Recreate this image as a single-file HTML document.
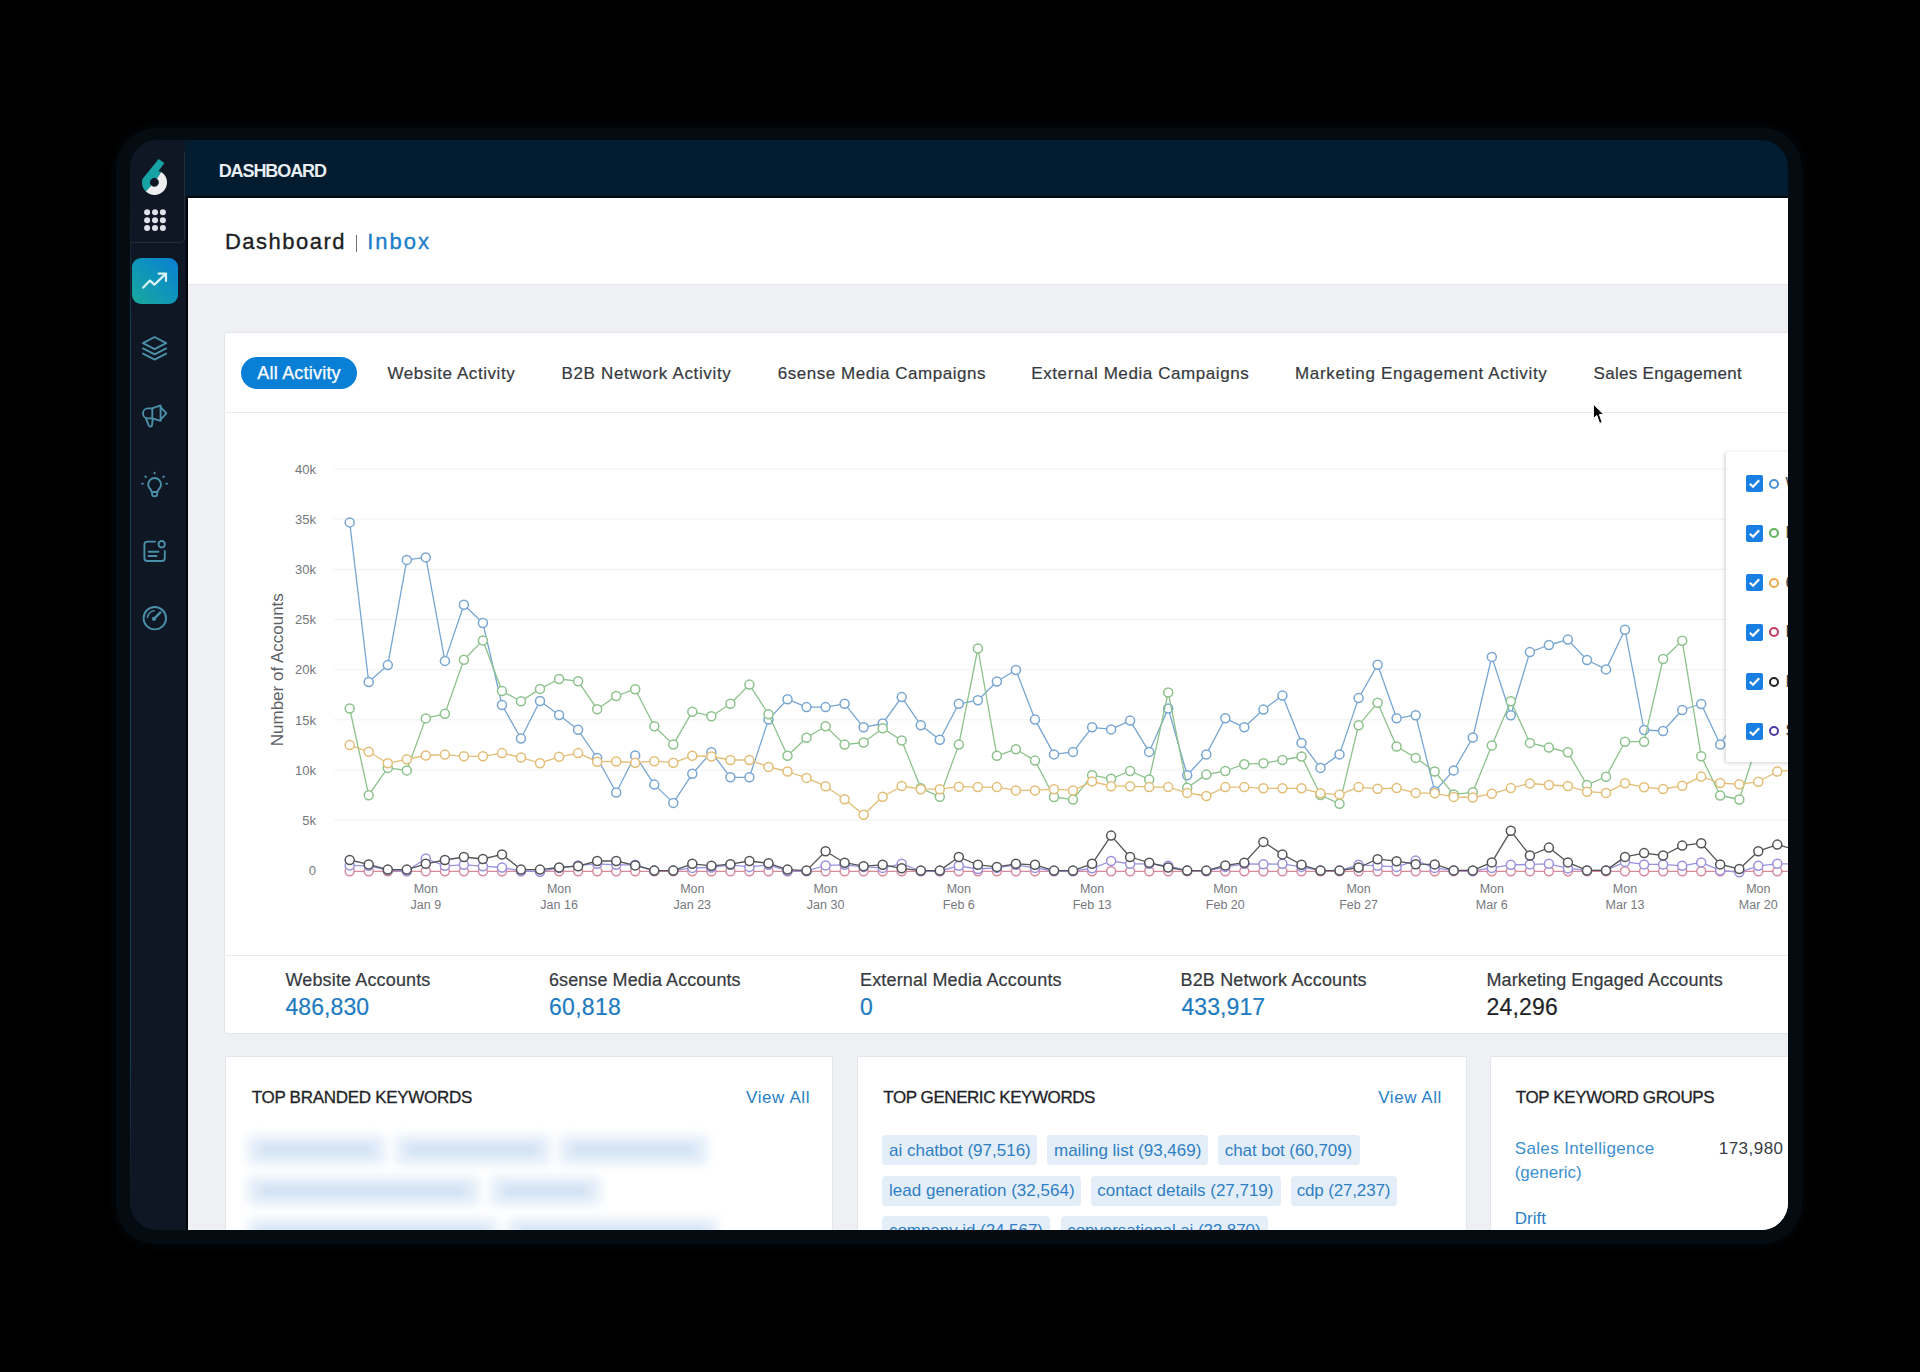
<!DOCTYPE html>
<html><head><meta charset="utf-8">
<style>
*{margin:0;padding:0;box-sizing:border-box}
html,body{width:1920px;height:1372px;background:#000;overflow:hidden;font-family:"Liberation Sans",sans-serif}
.abs{position:absolute}
#frame{position:absolute;left:115.5px;top:128px;width:1686.5px;height:1116px;border-radius:40px;background:#040b11;box-shadow:0 0 9px 2px rgba(4,10,15,.8)}
#win{position:absolute;left:130px;top:140px;width:1658px;height:1090px;border-radius:27px;overflow:hidden;background:#0f1624}
#hdr{position:absolute;left:54.6px;top:0;width:1604px;height:57px;background:#031c30}
#logobox{position:absolute;left:0;top:12px;width:54.6px;height:90.5px;border:1.2px solid #252c38;border-top:none;border-left:none;border-bottom-right-radius:5px}
#content{position:absolute;left:58px;top:57px;width:1600px;height:1033px;background:#eef0f3}
#cline{position:absolute;left:56px;top:56px;width:2px;height:1034px;background:#03070b}
#cline2{position:absolute;left:56px;top:56px;width:1602px;height:1.5px;background:#03070b}
#titlebar{position:absolute;left:58px;top:58px;width:1600px;height:86.5px;background:#fff;border-bottom:1px solid #e1e4e8}
.card{position:absolute;background:#fff;border:1px solid #e2e5e9;border-radius:2px}
.line{position:absolute;height:1px;background:#e6e8eb}
.txt{position:absolute;white-space:nowrap;line-height:1}
.chip{position:absolute;background:#e4eef8;border-radius:4px}
.bchip{position:absolute;background:#e6eff9;border-radius:6px;filter:blur(5px)}
.bin{position:absolute;left:12px;right:12px;top:10px;bottom:10px;background:#cde0f3;border-radius:4px}
#pill{position:absolute;background:#0a7fd6;border-radius:16px}
#legend{position:absolute;background:#fff;box-shadow:-1px 1px 4px rgba(0,0,0,.18);border-radius:2px}
.cb{position:absolute;width:17px;height:17px;background:#1a7fe3;border-radius:2px}
.cb svg{position:absolute;left:0;top:0}
.ldot{position:absolute;width:10px;height:10px;border:2px solid #333;border-radius:50%}
svg text{font-family:"Liberation Sans",sans-serif}
</style></head>
<body>
<div id="frame"></div>
<div id="win">
  <div id="hdr"></div>
  <div id="logobox"></div>
  <!-- logo -->
  <svg class="abs" style="left:0;top:0" width="58" height="110" viewBox="130 140 58 110">
    <path d="M158.6 158.9 L164.4 162.9 L158.4 171.2 L161.31 171.92 L156.90 178.71 A4.4 4.4 0 0 0 151.44 185.57 L145.82 191.39 A12.5 12.5 0 0 1 142.48 178.95 Z" fill="#17a2a5"/>
    <path d="M161.31 171.92 A12.5 12.5 0 1 1 145.82 191.39 L151.44 185.57 A4.4 4.4 0 1 0 156.90 178.71 Z" fill="#eceef0"/>
    <g fill="#dfe3e9">
      <circle cx="147.1" cy="212.3" r="3"/><circle cx="155" cy="212.3" r="3"/><circle cx="162.9" cy="212.3" r="3"/>
      <circle cx="147.1" cy="220.2" r="3"/><circle cx="155" cy="220.2" r="3"/><circle cx="162.9" cy="220.2" r="3"/>
      <circle cx="147.1" cy="228.1" r="3"/><circle cx="155" cy="228.1" r="3"/><circle cx="162.9" cy="228.1" r="3"/>
    </g>
  </svg>
  <!-- active nav -->
  <div class="abs" style="left:1.8px;top:118px;width:46px;height:46px;border-radius:9px;background:linear-gradient(45deg,#1aa99b 0%,#0e93bd 55%,#0b7fd3 100%)"></div>
  <svg class="abs" style="left:0;top:0" width="58" height="700" viewBox="130 140 58 700">
    <path d="M143.2 287.6 L150 280.6 L154.4 284.6 L165.2 274.4" fill="none" stroke="#d9f3f7" stroke-width="2.2" stroke-linecap="round" stroke-linejoin="round"/>
    <path d="M158.6 273.6 L166 273.6 L166 281" fill="none" stroke="#d9f3f7" stroke-width="2.2" stroke-linecap="round" stroke-linejoin="round"/>
    <g fill="none" stroke="#4a90a9" stroke-width="1.9" stroke-linejoin="round" stroke-linecap="round">
      <!-- layers -->
      <path d="M154.6 337 L166.2 343.2 L154.6 349.2 L143 343.2 Z"/>
      <path d="M143 348.4 L154.6 354.4 L166.2 348.4"/>
      <path d="M143 353.6 L154.6 359.6 L166.2 353.6"/>
      <!-- megaphone -->
      <path d="M152.3 408.4 L160.6 405.4 L160.6 420.8 L152.3 418.3 Z"/>
      <path d="M160.8 407.3 L166.4 413.3 L160.8 419.3"/>
      <path d="M152.3 408.4 L148 408.4 A5 5 0 0 0 148 418.4 L152.3 418.4"/>
      <path d="M146 418.3 L148.8 425.6 Q150.4 427.6 152 425.6 L152.8 418.6"/>
      <!-- bulb -->
      <path d="M150.6 489.4 A6.4 6.4 0 1 1 158.6 489.4 L157.4 492 L151.8 492 Z"/>
      <path d="M152 493.8 A2.6 2.6 0 0 0 157.2 493.8"/>
      <path d="M154.6 472.6 L154.6 473.4 M145.2 476.4 L146 477.2 M164 476.4 L163.2 477.2 M142 483.6 L143 483.6 M167.2 483.6 L166.2 483.6"/>
      <!-- contact card -->
      <path d="M155 541.6 L147.4 541.6 A3 3 0 0 0 144.4 544.6 L144.4 558 A3 3 0 0 0 147.4 561 L161.8 561 A3 3 0 0 0 164.8 558 L164.8 551"/>
      <circle cx="161.7" cy="544.2" r="3.2"/>
      <path d="M148.6 551.7 L158.4 551.7 M148.6 556 L156.4 556" stroke-width="2"/>
      <!-- gauge -->
      <circle cx="154.8" cy="618.2" r="11.2"/>
      <path d="M147.4 617.6 A7.4 7.4 0 0 1 154.2 610.8" stroke-width="1.5"/>
      <path d="M154 618.8 L160.4 612.4" stroke-width="2.4"/>
      <circle cx="154" cy="618.8" r="1.2" fill="#4a8ea6"/>
    </g>
  </svg>
  <div class="abs" style="left:0;top:60px;width:1px;height:1000px;background:linear-gradient(#0f1624,rgba(35,120,150,.45) 15%,rgba(35,120,150,.4) 85%,#0f1624)"></div>
  <div id="content"></div>
  <div id="cline"></div>
  <div id="cline2"></div>
  <div id="titlebar"></div>
  <!-- main card -->
  <div class="card" style="left:94.4px;top:191.7px;width:1600px;height:702px"></div>
  <div class="line" style="left:96px;top:272px;width:1600px;background:#e8eaed"></div>
  <div class="line" style="left:96px;top:814.5px;width:1600px;background:#e8eaed"></div>
  <div id="pill" style="left:110.6px;top:216.7px;width:116.8px;height:32.2px"></div>
  <svg class="abs" style="left:0;top:0" width="1658" height="1090" viewBox="130 140 1658 1090">
<line x1="334" y1="820.1" x2="1790" y2="820.1" stroke="#f0f1f3" stroke-width="1"/>
<line x1="334" y1="770.0" x2="1790" y2="770.0" stroke="#f0f1f3" stroke-width="1"/>
<line x1="334" y1="719.8" x2="1790" y2="719.8" stroke="#f0f1f3" stroke-width="1"/>
<line x1="334" y1="669.7" x2="1790" y2="669.7" stroke="#f0f1f3" stroke-width="1"/>
<line x1="334" y1="619.5" x2="1790" y2="619.5" stroke="#f0f1f3" stroke-width="1"/>
<line x1="334" y1="569.3" x2="1790" y2="569.3" stroke="#f0f1f3" stroke-width="1"/>
<line x1="334" y1="519.2" x2="1790" y2="519.2" stroke="#f0f1f3" stroke-width="1"/>
<line x1="334" y1="469.0" x2="1790" y2="469.0" stroke="#f0f1f3" stroke-width="1"/>
<text x="316" y="875.0" text-anchor="end" font-size="13" fill="#74777c">0</text>
<text x="316" y="824.8" text-anchor="end" font-size="13" fill="#74777c">5k</text>
<text x="316" y="774.7" text-anchor="end" font-size="13" fill="#74777c">10k</text>
<text x="316" y="724.5" text-anchor="end" font-size="13" fill="#74777c">15k</text>
<text x="316" y="674.4" text-anchor="end" font-size="13" fill="#74777c">20k</text>
<text x="316" y="624.2" text-anchor="end" font-size="13" fill="#74777c">25k</text>
<text x="316" y="574.0" text-anchor="end" font-size="13" fill="#74777c">30k</text>
<text x="316" y="523.9" text-anchor="end" font-size="13" fill="#74777c">35k</text>
<text x="316" y="473.7" text-anchor="end" font-size="13" fill="#74777c">40k</text>
<text transform="translate(282.6 669.7) rotate(-90)" text-anchor="middle" font-size="17" fill="#5d6065">Number of Accounts</text>
<text x="425.8" y="892.5" text-anchor="middle" font-size="12.5" fill="#77797e">Mon</text>
<text x="425.8" y="908.5" text-anchor="middle" font-size="12.5" fill="#77797e">Jan 9</text>
<text x="559.1" y="892.5" text-anchor="middle" font-size="12.5" fill="#77797e">Mon</text>
<text x="559.1" y="908.5" text-anchor="middle" font-size="12.5" fill="#77797e">Jan 16</text>
<text x="692.3" y="892.5" text-anchor="middle" font-size="12.5" fill="#77797e">Mon</text>
<text x="692.3" y="908.5" text-anchor="middle" font-size="12.5" fill="#77797e">Jan 23</text>
<text x="825.6" y="892.5" text-anchor="middle" font-size="12.5" fill="#77797e">Mon</text>
<text x="825.6" y="908.5" text-anchor="middle" font-size="12.5" fill="#77797e">Jan 30</text>
<text x="958.8" y="892.5" text-anchor="middle" font-size="12.5" fill="#77797e">Mon</text>
<text x="958.8" y="908.5" text-anchor="middle" font-size="12.5" fill="#77797e">Feb 6</text>
<text x="1092.1" y="892.5" text-anchor="middle" font-size="12.5" fill="#77797e">Mon</text>
<text x="1092.1" y="908.5" text-anchor="middle" font-size="12.5" fill="#77797e">Feb 13</text>
<text x="1225.3" y="892.5" text-anchor="middle" font-size="12.5" fill="#77797e">Mon</text>
<text x="1225.3" y="908.5" text-anchor="middle" font-size="12.5" fill="#77797e">Feb 20</text>
<text x="1358.6" y="892.5" text-anchor="middle" font-size="12.5" fill="#77797e">Mon</text>
<text x="1358.6" y="908.5" text-anchor="middle" font-size="12.5" fill="#77797e">Feb 27</text>
<text x="1491.8" y="892.5" text-anchor="middle" font-size="12.5" fill="#77797e">Mon</text>
<text x="1491.8" y="908.5" text-anchor="middle" font-size="12.5" fill="#77797e">Mar 6</text>
<text x="1625.0" y="892.5" text-anchor="middle" font-size="12.5" fill="#77797e">Mon</text>
<text x="1625.0" y="908.5" text-anchor="middle" font-size="12.5" fill="#77797e">Mar 13</text>
<text x="1758.3" y="892.5" text-anchor="middle" font-size="12.5" fill="#77797e">Mon</text>
<text x="1758.3" y="908.5" text-anchor="middle" font-size="12.5" fill="#77797e">Mar 20</text>
<polyline points="349.7,522.4 368.7,682.0 387.8,665.1 406.8,559.9 425.8,557.4 444.9,660.9 463.9,604.7 482.9,623.0 502.0,705.0 521.0,738.5 540.0,701.0 559.1,715.0 578.1,729.8 597.2,758.0 616.2,792.5 635.2,755.4 654.3,784.6 673.3,802.9 692.3,773.8 711.4,752.3 730.4,777.3 749.4,777.3 768.5,719.6 787.5,699.2 806.5,707.1 825.6,707.1 844.6,703.8 863.6,727.3 882.7,723.5 901.7,697.1 920.8,725.2 939.8,739.8 958.8,703.8 977.9,700.2 996.9,681.5 1015.9,670.0 1035.0,719.6 1054.0,754.4 1073.0,751.9 1092.1,727.3 1111.1,729.4 1130.1,720.6 1149.2,751.9 1168.2,708.5 1187.2,775.2 1206.3,754.4 1225.3,718.3 1244.3,727.3 1263.4,709.6 1282.4,695.6 1301.5,742.9 1320.5,767.9 1339.5,754.4 1358.6,698.1 1377.6,664.8 1396.6,718.3 1415.7,715.2 1434.7,791.2 1453.7,770.4 1472.8,737.5 1491.8,656.9 1510.8,715.2 1529.9,652.1 1548.9,645.0 1567.9,639.6 1587.0,660.0 1606.0,669.4 1625.0,629.8 1644.1,730.0 1663.1,731.0 1682.2,710.0 1701.2,704.0 1720.2,744.5 1739.3,715.0 1758.3,700.0 1777.3,690.0 1796.4,680.0" fill="none" stroke="#77a6d2" stroke-width="1.3" stroke-linejoin="round"/>
<circle cx="349.7" cy="522.4" r="4.5" fill="#fff" stroke="#77a6d2" stroke-width="1.5"/>
<circle cx="368.7" cy="682.0" r="4.5" fill="#fff" stroke="#77a6d2" stroke-width="1.5"/>
<circle cx="387.8" cy="665.1" r="4.5" fill="#fff" stroke="#77a6d2" stroke-width="1.5"/>
<circle cx="406.8" cy="559.9" r="4.5" fill="#fff" stroke="#77a6d2" stroke-width="1.5"/>
<circle cx="425.8" cy="557.4" r="4.5" fill="#fff" stroke="#77a6d2" stroke-width="1.5"/>
<circle cx="444.9" cy="660.9" r="4.5" fill="#fff" stroke="#77a6d2" stroke-width="1.5"/>
<circle cx="463.9" cy="604.7" r="4.5" fill="#fff" stroke="#77a6d2" stroke-width="1.5"/>
<circle cx="482.9" cy="623.0" r="4.5" fill="#fff" stroke="#77a6d2" stroke-width="1.5"/>
<circle cx="502.0" cy="705.0" r="4.5" fill="#fff" stroke="#77a6d2" stroke-width="1.5"/>
<circle cx="521.0" cy="738.5" r="4.5" fill="#fff" stroke="#77a6d2" stroke-width="1.5"/>
<circle cx="540.0" cy="701.0" r="4.5" fill="#fff" stroke="#77a6d2" stroke-width="1.5"/>
<circle cx="559.1" cy="715.0" r="4.5" fill="#fff" stroke="#77a6d2" stroke-width="1.5"/>
<circle cx="578.1" cy="729.8" r="4.5" fill="#fff" stroke="#77a6d2" stroke-width="1.5"/>
<circle cx="597.2" cy="758.0" r="4.5" fill="#fff" stroke="#77a6d2" stroke-width="1.5"/>
<circle cx="616.2" cy="792.5" r="4.5" fill="#fff" stroke="#77a6d2" stroke-width="1.5"/>
<circle cx="635.2" cy="755.4" r="4.5" fill="#fff" stroke="#77a6d2" stroke-width="1.5"/>
<circle cx="654.3" cy="784.6" r="4.5" fill="#fff" stroke="#77a6d2" stroke-width="1.5"/>
<circle cx="673.3" cy="802.9" r="4.5" fill="#fff" stroke="#77a6d2" stroke-width="1.5"/>
<circle cx="692.3" cy="773.8" r="4.5" fill="#fff" stroke="#77a6d2" stroke-width="1.5"/>
<circle cx="711.4" cy="752.3" r="4.5" fill="#fff" stroke="#77a6d2" stroke-width="1.5"/>
<circle cx="730.4" cy="777.3" r="4.5" fill="#fff" stroke="#77a6d2" stroke-width="1.5"/>
<circle cx="749.4" cy="777.3" r="4.5" fill="#fff" stroke="#77a6d2" stroke-width="1.5"/>
<circle cx="768.5" cy="719.6" r="4.5" fill="#fff" stroke="#77a6d2" stroke-width="1.5"/>
<circle cx="787.5" cy="699.2" r="4.5" fill="#fff" stroke="#77a6d2" stroke-width="1.5"/>
<circle cx="806.5" cy="707.1" r="4.5" fill="#fff" stroke="#77a6d2" stroke-width="1.5"/>
<circle cx="825.6" cy="707.1" r="4.5" fill="#fff" stroke="#77a6d2" stroke-width="1.5"/>
<circle cx="844.6" cy="703.8" r="4.5" fill="#fff" stroke="#77a6d2" stroke-width="1.5"/>
<circle cx="863.6" cy="727.3" r="4.5" fill="#fff" stroke="#77a6d2" stroke-width="1.5"/>
<circle cx="882.7" cy="723.5" r="4.5" fill="#fff" stroke="#77a6d2" stroke-width="1.5"/>
<circle cx="901.7" cy="697.1" r="4.5" fill="#fff" stroke="#77a6d2" stroke-width="1.5"/>
<circle cx="920.8" cy="725.2" r="4.5" fill="#fff" stroke="#77a6d2" stroke-width="1.5"/>
<circle cx="939.8" cy="739.8" r="4.5" fill="#fff" stroke="#77a6d2" stroke-width="1.5"/>
<circle cx="958.8" cy="703.8" r="4.5" fill="#fff" stroke="#77a6d2" stroke-width="1.5"/>
<circle cx="977.9" cy="700.2" r="4.5" fill="#fff" stroke="#77a6d2" stroke-width="1.5"/>
<circle cx="996.9" cy="681.5" r="4.5" fill="#fff" stroke="#77a6d2" stroke-width="1.5"/>
<circle cx="1015.9" cy="670.0" r="4.5" fill="#fff" stroke="#77a6d2" stroke-width="1.5"/>
<circle cx="1035.0" cy="719.6" r="4.5" fill="#fff" stroke="#77a6d2" stroke-width="1.5"/>
<circle cx="1054.0" cy="754.4" r="4.5" fill="#fff" stroke="#77a6d2" stroke-width="1.5"/>
<circle cx="1073.0" cy="751.9" r="4.5" fill="#fff" stroke="#77a6d2" stroke-width="1.5"/>
<circle cx="1092.1" cy="727.3" r="4.5" fill="#fff" stroke="#77a6d2" stroke-width="1.5"/>
<circle cx="1111.1" cy="729.4" r="4.5" fill="#fff" stroke="#77a6d2" stroke-width="1.5"/>
<circle cx="1130.1" cy="720.6" r="4.5" fill="#fff" stroke="#77a6d2" stroke-width="1.5"/>
<circle cx="1149.2" cy="751.9" r="4.5" fill="#fff" stroke="#77a6d2" stroke-width="1.5"/>
<circle cx="1168.2" cy="708.5" r="4.5" fill="#fff" stroke="#77a6d2" stroke-width="1.5"/>
<circle cx="1187.2" cy="775.2" r="4.5" fill="#fff" stroke="#77a6d2" stroke-width="1.5"/>
<circle cx="1206.3" cy="754.4" r="4.5" fill="#fff" stroke="#77a6d2" stroke-width="1.5"/>
<circle cx="1225.3" cy="718.3" r="4.5" fill="#fff" stroke="#77a6d2" stroke-width="1.5"/>
<circle cx="1244.3" cy="727.3" r="4.5" fill="#fff" stroke="#77a6d2" stroke-width="1.5"/>
<circle cx="1263.4" cy="709.6" r="4.5" fill="#fff" stroke="#77a6d2" stroke-width="1.5"/>
<circle cx="1282.4" cy="695.6" r="4.5" fill="#fff" stroke="#77a6d2" stroke-width="1.5"/>
<circle cx="1301.5" cy="742.9" r="4.5" fill="#fff" stroke="#77a6d2" stroke-width="1.5"/>
<circle cx="1320.5" cy="767.9" r="4.5" fill="#fff" stroke="#77a6d2" stroke-width="1.5"/>
<circle cx="1339.5" cy="754.4" r="4.5" fill="#fff" stroke="#77a6d2" stroke-width="1.5"/>
<circle cx="1358.6" cy="698.1" r="4.5" fill="#fff" stroke="#77a6d2" stroke-width="1.5"/>
<circle cx="1377.6" cy="664.8" r="4.5" fill="#fff" stroke="#77a6d2" stroke-width="1.5"/>
<circle cx="1396.6" cy="718.3" r="4.5" fill="#fff" stroke="#77a6d2" stroke-width="1.5"/>
<circle cx="1415.7" cy="715.2" r="4.5" fill="#fff" stroke="#77a6d2" stroke-width="1.5"/>
<circle cx="1434.7" cy="791.2" r="4.5" fill="#fff" stroke="#77a6d2" stroke-width="1.5"/>
<circle cx="1453.7" cy="770.4" r="4.5" fill="#fff" stroke="#77a6d2" stroke-width="1.5"/>
<circle cx="1472.8" cy="737.5" r="4.5" fill="#fff" stroke="#77a6d2" stroke-width="1.5"/>
<circle cx="1491.8" cy="656.9" r="4.5" fill="#fff" stroke="#77a6d2" stroke-width="1.5"/>
<circle cx="1510.8" cy="715.2" r="4.5" fill="#fff" stroke="#77a6d2" stroke-width="1.5"/>
<circle cx="1529.9" cy="652.1" r="4.5" fill="#fff" stroke="#77a6d2" stroke-width="1.5"/>
<circle cx="1548.9" cy="645.0" r="4.5" fill="#fff" stroke="#77a6d2" stroke-width="1.5"/>
<circle cx="1567.9" cy="639.6" r="4.5" fill="#fff" stroke="#77a6d2" stroke-width="1.5"/>
<circle cx="1587.0" cy="660.0" r="4.5" fill="#fff" stroke="#77a6d2" stroke-width="1.5"/>
<circle cx="1606.0" cy="669.4" r="4.5" fill="#fff" stroke="#77a6d2" stroke-width="1.5"/>
<circle cx="1625.0" cy="629.8" r="4.5" fill="#fff" stroke="#77a6d2" stroke-width="1.5"/>
<circle cx="1644.1" cy="730.0" r="4.5" fill="#fff" stroke="#77a6d2" stroke-width="1.5"/>
<circle cx="1663.1" cy="731.0" r="4.5" fill="#fff" stroke="#77a6d2" stroke-width="1.5"/>
<circle cx="1682.2" cy="710.0" r="4.5" fill="#fff" stroke="#77a6d2" stroke-width="1.5"/>
<circle cx="1701.2" cy="704.0" r="4.5" fill="#fff" stroke="#77a6d2" stroke-width="1.5"/>
<circle cx="1720.2" cy="744.5" r="4.5" fill="#fff" stroke="#77a6d2" stroke-width="1.5"/>
<circle cx="1739.3" cy="715.0" r="4.5" fill="#fff" stroke="#77a6d2" stroke-width="1.5"/>
<circle cx="1758.3" cy="700.0" r="4.5" fill="#fff" stroke="#77a6d2" stroke-width="1.5"/>
<circle cx="1777.3" cy="690.0" r="4.5" fill="#fff" stroke="#77a6d2" stroke-width="1.5"/>
<circle cx="1796.4" cy="680.0" r="4.5" fill="#fff" stroke="#77a6d2" stroke-width="1.5"/>
<polyline points="349.7,708.5 368.7,795.2 387.8,767.9 406.8,770.4 425.8,718.4 444.9,713.7 463.9,659.7 482.9,640.4 502.0,691.1 521.0,701.3 540.0,688.9 559.1,679.0 578.1,681.2 597.2,709.2 616.2,696.0 635.2,689.2 654.3,726.2 673.3,744.6 692.3,711.7 711.4,716.2 730.4,703.8 749.4,684.6 768.5,714.2 787.5,755.8 806.5,737.7 825.6,726.2 844.6,744.6 863.6,742.5 882.7,728.3 901.7,740.4 920.8,788.3 939.8,796.7 958.8,744.6 977.9,648.5 996.9,755.8 1015.9,749.2 1035.0,760.6 1054.0,797.0 1073.0,799.6 1092.1,775.2 1111.1,778.8 1130.1,771.0 1149.2,779.4 1168.2,692.5 1187.2,787.7 1206.3,774.6 1225.3,771.0 1244.3,764.2 1263.4,763.3 1282.4,760.0 1301.5,756.5 1320.5,795.0 1339.5,803.8 1358.6,725.2 1377.6,702.8 1396.6,746.5 1415.7,757.9 1434.7,771.5 1453.7,794.4 1472.8,792.3 1491.8,745.4 1510.8,701.2 1529.9,742.9 1548.9,747.5 1567.9,752.3 1587.0,785.0 1606.0,776.7 1625.0,741.7 1644.1,741.7 1663.1,659.0 1682.2,640.8 1701.2,756.3 1720.2,795.5 1739.3,799.5 1758.3,740.0 1777.3,720.0 1796.4,700.0" fill="none" stroke="#8cc28b" stroke-width="1.3" stroke-linejoin="round"/>
<circle cx="349.7" cy="708.5" r="4.5" fill="#fff" stroke="#8cc28b" stroke-width="1.5"/>
<circle cx="368.7" cy="795.2" r="4.5" fill="#fff" stroke="#8cc28b" stroke-width="1.5"/>
<circle cx="387.8" cy="767.9" r="4.5" fill="#fff" stroke="#8cc28b" stroke-width="1.5"/>
<circle cx="406.8" cy="770.4" r="4.5" fill="#fff" stroke="#8cc28b" stroke-width="1.5"/>
<circle cx="425.8" cy="718.4" r="4.5" fill="#fff" stroke="#8cc28b" stroke-width="1.5"/>
<circle cx="444.9" cy="713.7" r="4.5" fill="#fff" stroke="#8cc28b" stroke-width="1.5"/>
<circle cx="463.9" cy="659.7" r="4.5" fill="#fff" stroke="#8cc28b" stroke-width="1.5"/>
<circle cx="482.9" cy="640.4" r="4.5" fill="#fff" stroke="#8cc28b" stroke-width="1.5"/>
<circle cx="502.0" cy="691.1" r="4.5" fill="#fff" stroke="#8cc28b" stroke-width="1.5"/>
<circle cx="521.0" cy="701.3" r="4.5" fill="#fff" stroke="#8cc28b" stroke-width="1.5"/>
<circle cx="540.0" cy="688.9" r="4.5" fill="#fff" stroke="#8cc28b" stroke-width="1.5"/>
<circle cx="559.1" cy="679.0" r="4.5" fill="#fff" stroke="#8cc28b" stroke-width="1.5"/>
<circle cx="578.1" cy="681.2" r="4.5" fill="#fff" stroke="#8cc28b" stroke-width="1.5"/>
<circle cx="597.2" cy="709.2" r="4.5" fill="#fff" stroke="#8cc28b" stroke-width="1.5"/>
<circle cx="616.2" cy="696.0" r="4.5" fill="#fff" stroke="#8cc28b" stroke-width="1.5"/>
<circle cx="635.2" cy="689.2" r="4.5" fill="#fff" stroke="#8cc28b" stroke-width="1.5"/>
<circle cx="654.3" cy="726.2" r="4.5" fill="#fff" stroke="#8cc28b" stroke-width="1.5"/>
<circle cx="673.3" cy="744.6" r="4.5" fill="#fff" stroke="#8cc28b" stroke-width="1.5"/>
<circle cx="692.3" cy="711.7" r="4.5" fill="#fff" stroke="#8cc28b" stroke-width="1.5"/>
<circle cx="711.4" cy="716.2" r="4.5" fill="#fff" stroke="#8cc28b" stroke-width="1.5"/>
<circle cx="730.4" cy="703.8" r="4.5" fill="#fff" stroke="#8cc28b" stroke-width="1.5"/>
<circle cx="749.4" cy="684.6" r="4.5" fill="#fff" stroke="#8cc28b" stroke-width="1.5"/>
<circle cx="768.5" cy="714.2" r="4.5" fill="#fff" stroke="#8cc28b" stroke-width="1.5"/>
<circle cx="787.5" cy="755.8" r="4.5" fill="#fff" stroke="#8cc28b" stroke-width="1.5"/>
<circle cx="806.5" cy="737.7" r="4.5" fill="#fff" stroke="#8cc28b" stroke-width="1.5"/>
<circle cx="825.6" cy="726.2" r="4.5" fill="#fff" stroke="#8cc28b" stroke-width="1.5"/>
<circle cx="844.6" cy="744.6" r="4.5" fill="#fff" stroke="#8cc28b" stroke-width="1.5"/>
<circle cx="863.6" cy="742.5" r="4.5" fill="#fff" stroke="#8cc28b" stroke-width="1.5"/>
<circle cx="882.7" cy="728.3" r="4.5" fill="#fff" stroke="#8cc28b" stroke-width="1.5"/>
<circle cx="901.7" cy="740.4" r="4.5" fill="#fff" stroke="#8cc28b" stroke-width="1.5"/>
<circle cx="920.8" cy="788.3" r="4.5" fill="#fff" stroke="#8cc28b" stroke-width="1.5"/>
<circle cx="939.8" cy="796.7" r="4.5" fill="#fff" stroke="#8cc28b" stroke-width="1.5"/>
<circle cx="958.8" cy="744.6" r="4.5" fill="#fff" stroke="#8cc28b" stroke-width="1.5"/>
<circle cx="977.9" cy="648.5" r="4.5" fill="#fff" stroke="#8cc28b" stroke-width="1.5"/>
<circle cx="996.9" cy="755.8" r="4.5" fill="#fff" stroke="#8cc28b" stroke-width="1.5"/>
<circle cx="1015.9" cy="749.2" r="4.5" fill="#fff" stroke="#8cc28b" stroke-width="1.5"/>
<circle cx="1035.0" cy="760.6" r="4.5" fill="#fff" stroke="#8cc28b" stroke-width="1.5"/>
<circle cx="1054.0" cy="797.0" r="4.5" fill="#fff" stroke="#8cc28b" stroke-width="1.5"/>
<circle cx="1073.0" cy="799.6" r="4.5" fill="#fff" stroke="#8cc28b" stroke-width="1.5"/>
<circle cx="1092.1" cy="775.2" r="4.5" fill="#fff" stroke="#8cc28b" stroke-width="1.5"/>
<circle cx="1111.1" cy="778.8" r="4.5" fill="#fff" stroke="#8cc28b" stroke-width="1.5"/>
<circle cx="1130.1" cy="771.0" r="4.5" fill="#fff" stroke="#8cc28b" stroke-width="1.5"/>
<circle cx="1149.2" cy="779.4" r="4.5" fill="#fff" stroke="#8cc28b" stroke-width="1.5"/>
<circle cx="1168.2" cy="692.5" r="4.5" fill="#fff" stroke="#8cc28b" stroke-width="1.5"/>
<circle cx="1187.2" cy="787.7" r="4.5" fill="#fff" stroke="#8cc28b" stroke-width="1.5"/>
<circle cx="1206.3" cy="774.6" r="4.5" fill="#fff" stroke="#8cc28b" stroke-width="1.5"/>
<circle cx="1225.3" cy="771.0" r="4.5" fill="#fff" stroke="#8cc28b" stroke-width="1.5"/>
<circle cx="1244.3" cy="764.2" r="4.5" fill="#fff" stroke="#8cc28b" stroke-width="1.5"/>
<circle cx="1263.4" cy="763.3" r="4.5" fill="#fff" stroke="#8cc28b" stroke-width="1.5"/>
<circle cx="1282.4" cy="760.0" r="4.5" fill="#fff" stroke="#8cc28b" stroke-width="1.5"/>
<circle cx="1301.5" cy="756.5" r="4.5" fill="#fff" stroke="#8cc28b" stroke-width="1.5"/>
<circle cx="1320.5" cy="795.0" r="4.5" fill="#fff" stroke="#8cc28b" stroke-width="1.5"/>
<circle cx="1339.5" cy="803.8" r="4.5" fill="#fff" stroke="#8cc28b" stroke-width="1.5"/>
<circle cx="1358.6" cy="725.2" r="4.5" fill="#fff" stroke="#8cc28b" stroke-width="1.5"/>
<circle cx="1377.6" cy="702.8" r="4.5" fill="#fff" stroke="#8cc28b" stroke-width="1.5"/>
<circle cx="1396.6" cy="746.5" r="4.5" fill="#fff" stroke="#8cc28b" stroke-width="1.5"/>
<circle cx="1415.7" cy="757.9" r="4.5" fill="#fff" stroke="#8cc28b" stroke-width="1.5"/>
<circle cx="1434.7" cy="771.5" r="4.5" fill="#fff" stroke="#8cc28b" stroke-width="1.5"/>
<circle cx="1453.7" cy="794.4" r="4.5" fill="#fff" stroke="#8cc28b" stroke-width="1.5"/>
<circle cx="1472.8" cy="792.3" r="4.5" fill="#fff" stroke="#8cc28b" stroke-width="1.5"/>
<circle cx="1491.8" cy="745.4" r="4.5" fill="#fff" stroke="#8cc28b" stroke-width="1.5"/>
<circle cx="1510.8" cy="701.2" r="4.5" fill="#fff" stroke="#8cc28b" stroke-width="1.5"/>
<circle cx="1529.9" cy="742.9" r="4.5" fill="#fff" stroke="#8cc28b" stroke-width="1.5"/>
<circle cx="1548.9" cy="747.5" r="4.5" fill="#fff" stroke="#8cc28b" stroke-width="1.5"/>
<circle cx="1567.9" cy="752.3" r="4.5" fill="#fff" stroke="#8cc28b" stroke-width="1.5"/>
<circle cx="1587.0" cy="785.0" r="4.5" fill="#fff" stroke="#8cc28b" stroke-width="1.5"/>
<circle cx="1606.0" cy="776.7" r="4.5" fill="#fff" stroke="#8cc28b" stroke-width="1.5"/>
<circle cx="1625.0" cy="741.7" r="4.5" fill="#fff" stroke="#8cc28b" stroke-width="1.5"/>
<circle cx="1644.1" cy="741.7" r="4.5" fill="#fff" stroke="#8cc28b" stroke-width="1.5"/>
<circle cx="1663.1" cy="659.0" r="4.5" fill="#fff" stroke="#8cc28b" stroke-width="1.5"/>
<circle cx="1682.2" cy="640.8" r="4.5" fill="#fff" stroke="#8cc28b" stroke-width="1.5"/>
<circle cx="1701.2" cy="756.3" r="4.5" fill="#fff" stroke="#8cc28b" stroke-width="1.5"/>
<circle cx="1720.2" cy="795.5" r="4.5" fill="#fff" stroke="#8cc28b" stroke-width="1.5"/>
<circle cx="1739.3" cy="799.5" r="4.5" fill="#fff" stroke="#8cc28b" stroke-width="1.5"/>
<circle cx="1758.3" cy="740.0" r="4.5" fill="#fff" stroke="#8cc28b" stroke-width="1.5"/>
<circle cx="1777.3" cy="720.0" r="4.5" fill="#fff" stroke="#8cc28b" stroke-width="1.5"/>
<circle cx="1796.4" cy="700.0" r="4.5" fill="#fff" stroke="#8cc28b" stroke-width="1.5"/>
<polyline points="349.7,745.1 368.7,751.8 387.8,763.2 406.8,759.3 425.8,755.5 444.9,754.6 463.9,756.3 482.9,756.3 502.0,753.1 521.0,757.5 540.0,763.2 559.1,756.8 578.1,753.1 597.2,761.7 616.2,761.5 635.2,762.7 654.3,761.2 673.3,762.7 692.3,755.8 711.4,756.5 730.4,760.0 749.4,760.0 768.5,766.9 787.5,771.5 806.5,777.9 825.6,786.2 844.6,799.2 863.6,814.8 882.7,796.7 901.7,786.0 920.8,789.2 939.8,789.2 958.8,786.7 977.9,787.1 996.9,787.1 1015.9,790.4 1035.0,790.4 1054.0,789.2 1073.0,790.4 1092.1,781.5 1111.1,786.2 1130.1,786.2 1149.2,787.1 1168.2,787.1 1187.2,792.9 1206.3,796.0 1225.3,787.1 1244.3,787.1 1263.4,788.3 1282.4,788.3 1301.5,788.3 1320.5,793.3 1339.5,794.6 1358.6,787.1 1377.6,788.8 1396.6,788.1 1415.7,792.9 1434.7,793.3 1453.7,796.9 1472.8,797.5 1491.8,793.8 1510.8,788.1 1529.9,783.5 1548.9,785.0 1567.9,786.0 1587.0,791.7 1606.0,792.9 1625.0,783.3 1644.1,787.2 1663.1,789.0 1682.2,785.8 1701.2,776.6 1720.2,783.0 1739.3,784.3 1758.3,781.7 1777.3,771.5 1796.4,770.0" fill="none" stroke="#e3bd76" stroke-width="1.3" stroke-linejoin="round"/>
<circle cx="349.7" cy="745.1" r="4.5" fill="#fff" stroke="#e3bd76" stroke-width="1.5"/>
<circle cx="368.7" cy="751.8" r="4.5" fill="#fff" stroke="#e3bd76" stroke-width="1.5"/>
<circle cx="387.8" cy="763.2" r="4.5" fill="#fff" stroke="#e3bd76" stroke-width="1.5"/>
<circle cx="406.8" cy="759.3" r="4.5" fill="#fff" stroke="#e3bd76" stroke-width="1.5"/>
<circle cx="425.8" cy="755.5" r="4.5" fill="#fff" stroke="#e3bd76" stroke-width="1.5"/>
<circle cx="444.9" cy="754.6" r="4.5" fill="#fff" stroke="#e3bd76" stroke-width="1.5"/>
<circle cx="463.9" cy="756.3" r="4.5" fill="#fff" stroke="#e3bd76" stroke-width="1.5"/>
<circle cx="482.9" cy="756.3" r="4.5" fill="#fff" stroke="#e3bd76" stroke-width="1.5"/>
<circle cx="502.0" cy="753.1" r="4.5" fill="#fff" stroke="#e3bd76" stroke-width="1.5"/>
<circle cx="521.0" cy="757.5" r="4.5" fill="#fff" stroke="#e3bd76" stroke-width="1.5"/>
<circle cx="540.0" cy="763.2" r="4.5" fill="#fff" stroke="#e3bd76" stroke-width="1.5"/>
<circle cx="559.1" cy="756.8" r="4.5" fill="#fff" stroke="#e3bd76" stroke-width="1.5"/>
<circle cx="578.1" cy="753.1" r="4.5" fill="#fff" stroke="#e3bd76" stroke-width="1.5"/>
<circle cx="597.2" cy="761.7" r="4.5" fill="#fff" stroke="#e3bd76" stroke-width="1.5"/>
<circle cx="616.2" cy="761.5" r="4.5" fill="#fff" stroke="#e3bd76" stroke-width="1.5"/>
<circle cx="635.2" cy="762.7" r="4.5" fill="#fff" stroke="#e3bd76" stroke-width="1.5"/>
<circle cx="654.3" cy="761.2" r="4.5" fill="#fff" stroke="#e3bd76" stroke-width="1.5"/>
<circle cx="673.3" cy="762.7" r="4.5" fill="#fff" stroke="#e3bd76" stroke-width="1.5"/>
<circle cx="692.3" cy="755.8" r="4.5" fill="#fff" stroke="#e3bd76" stroke-width="1.5"/>
<circle cx="711.4" cy="756.5" r="4.5" fill="#fff" stroke="#e3bd76" stroke-width="1.5"/>
<circle cx="730.4" cy="760.0" r="4.5" fill="#fff" stroke="#e3bd76" stroke-width="1.5"/>
<circle cx="749.4" cy="760.0" r="4.5" fill="#fff" stroke="#e3bd76" stroke-width="1.5"/>
<circle cx="768.5" cy="766.9" r="4.5" fill="#fff" stroke="#e3bd76" stroke-width="1.5"/>
<circle cx="787.5" cy="771.5" r="4.5" fill="#fff" stroke="#e3bd76" stroke-width="1.5"/>
<circle cx="806.5" cy="777.9" r="4.5" fill="#fff" stroke="#e3bd76" stroke-width="1.5"/>
<circle cx="825.6" cy="786.2" r="4.5" fill="#fff" stroke="#e3bd76" stroke-width="1.5"/>
<circle cx="844.6" cy="799.2" r="4.5" fill="#fff" stroke="#e3bd76" stroke-width="1.5"/>
<circle cx="863.6" cy="814.8" r="4.5" fill="#fff" stroke="#e3bd76" stroke-width="1.5"/>
<circle cx="882.7" cy="796.7" r="4.5" fill="#fff" stroke="#e3bd76" stroke-width="1.5"/>
<circle cx="901.7" cy="786.0" r="4.5" fill="#fff" stroke="#e3bd76" stroke-width="1.5"/>
<circle cx="920.8" cy="789.2" r="4.5" fill="#fff" stroke="#e3bd76" stroke-width="1.5"/>
<circle cx="939.8" cy="789.2" r="4.5" fill="#fff" stroke="#e3bd76" stroke-width="1.5"/>
<circle cx="958.8" cy="786.7" r="4.5" fill="#fff" stroke="#e3bd76" stroke-width="1.5"/>
<circle cx="977.9" cy="787.1" r="4.5" fill="#fff" stroke="#e3bd76" stroke-width="1.5"/>
<circle cx="996.9" cy="787.1" r="4.5" fill="#fff" stroke="#e3bd76" stroke-width="1.5"/>
<circle cx="1015.9" cy="790.4" r="4.5" fill="#fff" stroke="#e3bd76" stroke-width="1.5"/>
<circle cx="1035.0" cy="790.4" r="4.5" fill="#fff" stroke="#e3bd76" stroke-width="1.5"/>
<circle cx="1054.0" cy="789.2" r="4.5" fill="#fff" stroke="#e3bd76" stroke-width="1.5"/>
<circle cx="1073.0" cy="790.4" r="4.5" fill="#fff" stroke="#e3bd76" stroke-width="1.5"/>
<circle cx="1092.1" cy="781.5" r="4.5" fill="#fff" stroke="#e3bd76" stroke-width="1.5"/>
<circle cx="1111.1" cy="786.2" r="4.5" fill="#fff" stroke="#e3bd76" stroke-width="1.5"/>
<circle cx="1130.1" cy="786.2" r="4.5" fill="#fff" stroke="#e3bd76" stroke-width="1.5"/>
<circle cx="1149.2" cy="787.1" r="4.5" fill="#fff" stroke="#e3bd76" stroke-width="1.5"/>
<circle cx="1168.2" cy="787.1" r="4.5" fill="#fff" stroke="#e3bd76" stroke-width="1.5"/>
<circle cx="1187.2" cy="792.9" r="4.5" fill="#fff" stroke="#e3bd76" stroke-width="1.5"/>
<circle cx="1206.3" cy="796.0" r="4.5" fill="#fff" stroke="#e3bd76" stroke-width="1.5"/>
<circle cx="1225.3" cy="787.1" r="4.5" fill="#fff" stroke="#e3bd76" stroke-width="1.5"/>
<circle cx="1244.3" cy="787.1" r="4.5" fill="#fff" stroke="#e3bd76" stroke-width="1.5"/>
<circle cx="1263.4" cy="788.3" r="4.5" fill="#fff" stroke="#e3bd76" stroke-width="1.5"/>
<circle cx="1282.4" cy="788.3" r="4.5" fill="#fff" stroke="#e3bd76" stroke-width="1.5"/>
<circle cx="1301.5" cy="788.3" r="4.5" fill="#fff" stroke="#e3bd76" stroke-width="1.5"/>
<circle cx="1320.5" cy="793.3" r="4.5" fill="#fff" stroke="#e3bd76" stroke-width="1.5"/>
<circle cx="1339.5" cy="794.6" r="4.5" fill="#fff" stroke="#e3bd76" stroke-width="1.5"/>
<circle cx="1358.6" cy="787.1" r="4.5" fill="#fff" stroke="#e3bd76" stroke-width="1.5"/>
<circle cx="1377.6" cy="788.8" r="4.5" fill="#fff" stroke="#e3bd76" stroke-width="1.5"/>
<circle cx="1396.6" cy="788.1" r="4.5" fill="#fff" stroke="#e3bd76" stroke-width="1.5"/>
<circle cx="1415.7" cy="792.9" r="4.5" fill="#fff" stroke="#e3bd76" stroke-width="1.5"/>
<circle cx="1434.7" cy="793.3" r="4.5" fill="#fff" stroke="#e3bd76" stroke-width="1.5"/>
<circle cx="1453.7" cy="796.9" r="4.5" fill="#fff" stroke="#e3bd76" stroke-width="1.5"/>
<circle cx="1472.8" cy="797.5" r="4.5" fill="#fff" stroke="#e3bd76" stroke-width="1.5"/>
<circle cx="1491.8" cy="793.8" r="4.5" fill="#fff" stroke="#e3bd76" stroke-width="1.5"/>
<circle cx="1510.8" cy="788.1" r="4.5" fill="#fff" stroke="#e3bd76" stroke-width="1.5"/>
<circle cx="1529.9" cy="783.5" r="4.5" fill="#fff" stroke="#e3bd76" stroke-width="1.5"/>
<circle cx="1548.9" cy="785.0" r="4.5" fill="#fff" stroke="#e3bd76" stroke-width="1.5"/>
<circle cx="1567.9" cy="786.0" r="4.5" fill="#fff" stroke="#e3bd76" stroke-width="1.5"/>
<circle cx="1587.0" cy="791.7" r="4.5" fill="#fff" stroke="#e3bd76" stroke-width="1.5"/>
<circle cx="1606.0" cy="792.9" r="4.5" fill="#fff" stroke="#e3bd76" stroke-width="1.5"/>
<circle cx="1625.0" cy="783.3" r="4.5" fill="#fff" stroke="#e3bd76" stroke-width="1.5"/>
<circle cx="1644.1" cy="787.2" r="4.5" fill="#fff" stroke="#e3bd76" stroke-width="1.5"/>
<circle cx="1663.1" cy="789.0" r="4.5" fill="#fff" stroke="#e3bd76" stroke-width="1.5"/>
<circle cx="1682.2" cy="785.8" r="4.5" fill="#fff" stroke="#e3bd76" stroke-width="1.5"/>
<circle cx="1701.2" cy="776.6" r="4.5" fill="#fff" stroke="#e3bd76" stroke-width="1.5"/>
<circle cx="1720.2" cy="783.0" r="4.5" fill="#fff" stroke="#e3bd76" stroke-width="1.5"/>
<circle cx="1739.3" cy="784.3" r="4.5" fill="#fff" stroke="#e3bd76" stroke-width="1.5"/>
<circle cx="1758.3" cy="781.7" r="4.5" fill="#fff" stroke="#e3bd76" stroke-width="1.5"/>
<circle cx="1777.3" cy="771.5" r="4.5" fill="#fff" stroke="#e3bd76" stroke-width="1.5"/>
<circle cx="1796.4" cy="770.0" r="4.5" fill="#fff" stroke="#e3bd76" stroke-width="1.5"/>
<polyline points="349.7,871.3 368.7,871.3 387.8,871.3 406.8,871.3 425.8,871.3 444.9,871.3 463.9,871.3 482.9,871.3 502.0,871.3 521.0,871.3 540.0,871.3 559.1,871.3 578.1,871.3 597.2,871.3 616.2,871.3 635.2,871.3 654.3,871.3 673.3,871.3 692.3,871.3 711.4,871.3 730.4,871.3 749.4,871.3 768.5,871.3 787.5,871.3 806.5,871.3 825.6,871.3 844.6,871.3 863.6,871.3 882.7,871.3 901.7,871.3 920.8,871.3 939.8,871.3 958.8,871.3 977.9,871.3 996.9,871.3 1015.9,871.3 1035.0,871.3 1054.0,871.3 1073.0,871.3 1092.1,871.3 1111.1,871.3 1130.1,871.3 1149.2,871.3 1168.2,871.3 1187.2,871.3 1206.3,871.3 1225.3,871.3 1244.3,871.3 1263.4,871.3 1282.4,871.3 1301.5,871.3 1320.5,871.3 1339.5,871.3 1358.6,871.3 1377.6,871.3 1396.6,871.3 1415.7,871.3 1434.7,871.3 1453.7,871.3 1472.8,871.3 1491.8,871.3 1510.8,871.3 1529.9,871.3 1548.9,871.3 1567.9,871.3 1587.0,871.3 1606.0,871.3 1625.0,871.3 1644.1,871.3 1663.1,871.3 1682.2,871.3 1701.2,871.3 1720.2,871.3 1739.3,871.3 1758.3,871.3 1777.3,871.3 1796.4,871.3" fill="none" stroke="#d88a9d" stroke-width="1.3" stroke-linejoin="round"/>
<circle cx="349.7" cy="871.3" r="4.5" fill="#fff" stroke="#d88a9d" stroke-width="1.5"/>
<circle cx="368.7" cy="871.3" r="4.5" fill="#fff" stroke="#d88a9d" stroke-width="1.5"/>
<circle cx="387.8" cy="871.3" r="4.5" fill="#fff" stroke="#d88a9d" stroke-width="1.5"/>
<circle cx="406.8" cy="871.3" r="4.5" fill="#fff" stroke="#d88a9d" stroke-width="1.5"/>
<circle cx="425.8" cy="871.3" r="4.5" fill="#fff" stroke="#d88a9d" stroke-width="1.5"/>
<circle cx="444.9" cy="871.3" r="4.5" fill="#fff" stroke="#d88a9d" stroke-width="1.5"/>
<circle cx="463.9" cy="871.3" r="4.5" fill="#fff" stroke="#d88a9d" stroke-width="1.5"/>
<circle cx="482.9" cy="871.3" r="4.5" fill="#fff" stroke="#d88a9d" stroke-width="1.5"/>
<circle cx="502.0" cy="871.3" r="4.5" fill="#fff" stroke="#d88a9d" stroke-width="1.5"/>
<circle cx="521.0" cy="871.3" r="4.5" fill="#fff" stroke="#d88a9d" stroke-width="1.5"/>
<circle cx="540.0" cy="871.3" r="4.5" fill="#fff" stroke="#d88a9d" stroke-width="1.5"/>
<circle cx="559.1" cy="871.3" r="4.5" fill="#fff" stroke="#d88a9d" stroke-width="1.5"/>
<circle cx="578.1" cy="871.3" r="4.5" fill="#fff" stroke="#d88a9d" stroke-width="1.5"/>
<circle cx="597.2" cy="871.3" r="4.5" fill="#fff" stroke="#d88a9d" stroke-width="1.5"/>
<circle cx="616.2" cy="871.3" r="4.5" fill="#fff" stroke="#d88a9d" stroke-width="1.5"/>
<circle cx="635.2" cy="871.3" r="4.5" fill="#fff" stroke="#d88a9d" stroke-width="1.5"/>
<circle cx="654.3" cy="871.3" r="4.5" fill="#fff" stroke="#d88a9d" stroke-width="1.5"/>
<circle cx="673.3" cy="871.3" r="4.5" fill="#fff" stroke="#d88a9d" stroke-width="1.5"/>
<circle cx="692.3" cy="871.3" r="4.5" fill="#fff" stroke="#d88a9d" stroke-width="1.5"/>
<circle cx="711.4" cy="871.3" r="4.5" fill="#fff" stroke="#d88a9d" stroke-width="1.5"/>
<circle cx="730.4" cy="871.3" r="4.5" fill="#fff" stroke="#d88a9d" stroke-width="1.5"/>
<circle cx="749.4" cy="871.3" r="4.5" fill="#fff" stroke="#d88a9d" stroke-width="1.5"/>
<circle cx="768.5" cy="871.3" r="4.5" fill="#fff" stroke="#d88a9d" stroke-width="1.5"/>
<circle cx="787.5" cy="871.3" r="4.5" fill="#fff" stroke="#d88a9d" stroke-width="1.5"/>
<circle cx="806.5" cy="871.3" r="4.5" fill="#fff" stroke="#d88a9d" stroke-width="1.5"/>
<circle cx="825.6" cy="871.3" r="4.5" fill="#fff" stroke="#d88a9d" stroke-width="1.5"/>
<circle cx="844.6" cy="871.3" r="4.5" fill="#fff" stroke="#d88a9d" stroke-width="1.5"/>
<circle cx="863.6" cy="871.3" r="4.5" fill="#fff" stroke="#d88a9d" stroke-width="1.5"/>
<circle cx="882.7" cy="871.3" r="4.5" fill="#fff" stroke="#d88a9d" stroke-width="1.5"/>
<circle cx="901.7" cy="871.3" r="4.5" fill="#fff" stroke="#d88a9d" stroke-width="1.5"/>
<circle cx="920.8" cy="871.3" r="4.5" fill="#fff" stroke="#d88a9d" stroke-width="1.5"/>
<circle cx="939.8" cy="871.3" r="4.5" fill="#fff" stroke="#d88a9d" stroke-width="1.5"/>
<circle cx="958.8" cy="871.3" r="4.5" fill="#fff" stroke="#d88a9d" stroke-width="1.5"/>
<circle cx="977.9" cy="871.3" r="4.5" fill="#fff" stroke="#d88a9d" stroke-width="1.5"/>
<circle cx="996.9" cy="871.3" r="4.5" fill="#fff" stroke="#d88a9d" stroke-width="1.5"/>
<circle cx="1015.9" cy="871.3" r="4.5" fill="#fff" stroke="#d88a9d" stroke-width="1.5"/>
<circle cx="1035.0" cy="871.3" r="4.5" fill="#fff" stroke="#d88a9d" stroke-width="1.5"/>
<circle cx="1054.0" cy="871.3" r="4.5" fill="#fff" stroke="#d88a9d" stroke-width="1.5"/>
<circle cx="1073.0" cy="871.3" r="4.5" fill="#fff" stroke="#d88a9d" stroke-width="1.5"/>
<circle cx="1092.1" cy="871.3" r="4.5" fill="#fff" stroke="#d88a9d" stroke-width="1.5"/>
<circle cx="1111.1" cy="871.3" r="4.5" fill="#fff" stroke="#d88a9d" stroke-width="1.5"/>
<circle cx="1130.1" cy="871.3" r="4.5" fill="#fff" stroke="#d88a9d" stroke-width="1.5"/>
<circle cx="1149.2" cy="871.3" r="4.5" fill="#fff" stroke="#d88a9d" stroke-width="1.5"/>
<circle cx="1168.2" cy="871.3" r="4.5" fill="#fff" stroke="#d88a9d" stroke-width="1.5"/>
<circle cx="1187.2" cy="871.3" r="4.5" fill="#fff" stroke="#d88a9d" stroke-width="1.5"/>
<circle cx="1206.3" cy="871.3" r="4.5" fill="#fff" stroke="#d88a9d" stroke-width="1.5"/>
<circle cx="1225.3" cy="871.3" r="4.5" fill="#fff" stroke="#d88a9d" stroke-width="1.5"/>
<circle cx="1244.3" cy="871.3" r="4.5" fill="#fff" stroke="#d88a9d" stroke-width="1.5"/>
<circle cx="1263.4" cy="871.3" r="4.5" fill="#fff" stroke="#d88a9d" stroke-width="1.5"/>
<circle cx="1282.4" cy="871.3" r="4.5" fill="#fff" stroke="#d88a9d" stroke-width="1.5"/>
<circle cx="1301.5" cy="871.3" r="4.5" fill="#fff" stroke="#d88a9d" stroke-width="1.5"/>
<circle cx="1320.5" cy="871.3" r="4.5" fill="#fff" stroke="#d88a9d" stroke-width="1.5"/>
<circle cx="1339.5" cy="871.3" r="4.5" fill="#fff" stroke="#d88a9d" stroke-width="1.5"/>
<circle cx="1358.6" cy="871.3" r="4.5" fill="#fff" stroke="#d88a9d" stroke-width="1.5"/>
<circle cx="1377.6" cy="871.3" r="4.5" fill="#fff" stroke="#d88a9d" stroke-width="1.5"/>
<circle cx="1396.6" cy="871.3" r="4.5" fill="#fff" stroke="#d88a9d" stroke-width="1.5"/>
<circle cx="1415.7" cy="871.3" r="4.5" fill="#fff" stroke="#d88a9d" stroke-width="1.5"/>
<circle cx="1434.7" cy="871.3" r="4.5" fill="#fff" stroke="#d88a9d" stroke-width="1.5"/>
<circle cx="1453.7" cy="871.3" r="4.5" fill="#fff" stroke="#d88a9d" stroke-width="1.5"/>
<circle cx="1472.8" cy="871.3" r="4.5" fill="#fff" stroke="#d88a9d" stroke-width="1.5"/>
<circle cx="1491.8" cy="871.3" r="4.5" fill="#fff" stroke="#d88a9d" stroke-width="1.5"/>
<circle cx="1510.8" cy="871.3" r="4.5" fill="#fff" stroke="#d88a9d" stroke-width="1.5"/>
<circle cx="1529.9" cy="871.3" r="4.5" fill="#fff" stroke="#d88a9d" stroke-width="1.5"/>
<circle cx="1548.9" cy="871.3" r="4.5" fill="#fff" stroke="#d88a9d" stroke-width="1.5"/>
<circle cx="1567.9" cy="871.3" r="4.5" fill="#fff" stroke="#d88a9d" stroke-width="1.5"/>
<circle cx="1587.0" cy="871.3" r="4.5" fill="#fff" stroke="#d88a9d" stroke-width="1.5"/>
<circle cx="1606.0" cy="871.3" r="4.5" fill="#fff" stroke="#d88a9d" stroke-width="1.5"/>
<circle cx="1625.0" cy="871.3" r="4.5" fill="#fff" stroke="#d88a9d" stroke-width="1.5"/>
<circle cx="1644.1" cy="871.3" r="4.5" fill="#fff" stroke="#d88a9d" stroke-width="1.5"/>
<circle cx="1663.1" cy="871.3" r="4.5" fill="#fff" stroke="#d88a9d" stroke-width="1.5"/>
<circle cx="1682.2" cy="871.3" r="4.5" fill="#fff" stroke="#d88a9d" stroke-width="1.5"/>
<circle cx="1701.2" cy="871.3" r="4.5" fill="#fff" stroke="#d88a9d" stroke-width="1.5"/>
<circle cx="1720.2" cy="871.3" r="4.5" fill="#fff" stroke="#d88a9d" stroke-width="1.5"/>
<circle cx="1739.3" cy="871.3" r="4.5" fill="#fff" stroke="#d88a9d" stroke-width="1.5"/>
<circle cx="1758.3" cy="871.3" r="4.5" fill="#fff" stroke="#d88a9d" stroke-width="1.5"/>
<circle cx="1777.3" cy="871.3" r="4.5" fill="#fff" stroke="#d88a9d" stroke-width="1.5"/>
<circle cx="1796.4" cy="871.3" r="4.5" fill="#fff" stroke="#d88a9d" stroke-width="1.5"/>
<polyline points="349.7,865.4 368.7,865.8 387.8,870.0 406.8,871.0 425.8,858.5 444.9,865.8 463.9,864.8 482.9,866.2 502.0,867.5 521.0,871.0 540.0,871.7 559.1,867.9 578.1,865.4 597.2,863.8 616.2,864.8 635.2,864.8 654.3,870.6 673.3,870.6 692.3,867.9 711.4,867.5 730.4,864.8 749.4,866.9 768.5,864.8 787.5,871.0 806.5,871.0 825.6,865.4 844.6,864.8 863.6,866.9 882.7,867.9 901.7,863.8 920.8,871.0 939.8,871.0 958.8,865.8 977.9,869.0 996.9,867.9 1015.9,864.8 1035.0,867.9 1054.0,871.0 1073.0,871.0 1092.1,868.3 1111.1,861.0 1130.1,863.8 1149.2,863.8 1168.2,865.8 1187.2,870.6 1206.3,871.0 1225.3,866.9 1244.3,863.8 1263.4,864.2 1282.4,863.8 1301.5,866.9 1320.5,870.6 1339.5,870.6 1358.6,864.8 1377.6,865.8 1396.6,866.9 1415.7,860.6 1434.7,867.9 1453.7,870.6 1472.8,871.0 1491.8,867.9 1510.8,864.8 1529.9,864.4 1548.9,863.8 1567.9,868.4 1587.0,870.4 1606.0,870.4 1625.0,861.9 1644.1,864.4 1663.1,864.4 1682.2,865.8 1701.2,862.4 1720.2,870.4 1739.3,872.3 1758.3,865.8 1777.3,863.8 1796.4,864.0" fill="none" stroke="#9a90de" stroke-width="1.3" stroke-linejoin="round"/>
<circle cx="349.7" cy="865.4" r="4.5" fill="#fff" stroke="#9a90de" stroke-width="1.5"/>
<circle cx="368.7" cy="865.8" r="4.5" fill="#fff" stroke="#9a90de" stroke-width="1.5"/>
<circle cx="387.8" cy="870.0" r="4.5" fill="#fff" stroke="#9a90de" stroke-width="1.5"/>
<circle cx="406.8" cy="871.0" r="4.5" fill="#fff" stroke="#9a90de" stroke-width="1.5"/>
<circle cx="425.8" cy="858.5" r="4.5" fill="#fff" stroke="#9a90de" stroke-width="1.5"/>
<circle cx="444.9" cy="865.8" r="4.5" fill="#fff" stroke="#9a90de" stroke-width="1.5"/>
<circle cx="463.9" cy="864.8" r="4.5" fill="#fff" stroke="#9a90de" stroke-width="1.5"/>
<circle cx="482.9" cy="866.2" r="4.5" fill="#fff" stroke="#9a90de" stroke-width="1.5"/>
<circle cx="502.0" cy="867.5" r="4.5" fill="#fff" stroke="#9a90de" stroke-width="1.5"/>
<circle cx="521.0" cy="871.0" r="4.5" fill="#fff" stroke="#9a90de" stroke-width="1.5"/>
<circle cx="540.0" cy="871.7" r="4.5" fill="#fff" stroke="#9a90de" stroke-width="1.5"/>
<circle cx="559.1" cy="867.9" r="4.5" fill="#fff" stroke="#9a90de" stroke-width="1.5"/>
<circle cx="578.1" cy="865.4" r="4.5" fill="#fff" stroke="#9a90de" stroke-width="1.5"/>
<circle cx="597.2" cy="863.8" r="4.5" fill="#fff" stroke="#9a90de" stroke-width="1.5"/>
<circle cx="616.2" cy="864.8" r="4.5" fill="#fff" stroke="#9a90de" stroke-width="1.5"/>
<circle cx="635.2" cy="864.8" r="4.5" fill="#fff" stroke="#9a90de" stroke-width="1.5"/>
<circle cx="654.3" cy="870.6" r="4.5" fill="#fff" stroke="#9a90de" stroke-width="1.5"/>
<circle cx="673.3" cy="870.6" r="4.5" fill="#fff" stroke="#9a90de" stroke-width="1.5"/>
<circle cx="692.3" cy="867.9" r="4.5" fill="#fff" stroke="#9a90de" stroke-width="1.5"/>
<circle cx="711.4" cy="867.5" r="4.5" fill="#fff" stroke="#9a90de" stroke-width="1.5"/>
<circle cx="730.4" cy="864.8" r="4.5" fill="#fff" stroke="#9a90de" stroke-width="1.5"/>
<circle cx="749.4" cy="866.9" r="4.5" fill="#fff" stroke="#9a90de" stroke-width="1.5"/>
<circle cx="768.5" cy="864.8" r="4.5" fill="#fff" stroke="#9a90de" stroke-width="1.5"/>
<circle cx="787.5" cy="871.0" r="4.5" fill="#fff" stroke="#9a90de" stroke-width="1.5"/>
<circle cx="806.5" cy="871.0" r="4.5" fill="#fff" stroke="#9a90de" stroke-width="1.5"/>
<circle cx="825.6" cy="865.4" r="4.5" fill="#fff" stroke="#9a90de" stroke-width="1.5"/>
<circle cx="844.6" cy="864.8" r="4.5" fill="#fff" stroke="#9a90de" stroke-width="1.5"/>
<circle cx="863.6" cy="866.9" r="4.5" fill="#fff" stroke="#9a90de" stroke-width="1.5"/>
<circle cx="882.7" cy="867.9" r="4.5" fill="#fff" stroke="#9a90de" stroke-width="1.5"/>
<circle cx="901.7" cy="863.8" r="4.5" fill="#fff" stroke="#9a90de" stroke-width="1.5"/>
<circle cx="920.8" cy="871.0" r="4.5" fill="#fff" stroke="#9a90de" stroke-width="1.5"/>
<circle cx="939.8" cy="871.0" r="4.5" fill="#fff" stroke="#9a90de" stroke-width="1.5"/>
<circle cx="958.8" cy="865.8" r="4.5" fill="#fff" stroke="#9a90de" stroke-width="1.5"/>
<circle cx="977.9" cy="869.0" r="4.5" fill="#fff" stroke="#9a90de" stroke-width="1.5"/>
<circle cx="996.9" cy="867.9" r="4.5" fill="#fff" stroke="#9a90de" stroke-width="1.5"/>
<circle cx="1015.9" cy="864.8" r="4.5" fill="#fff" stroke="#9a90de" stroke-width="1.5"/>
<circle cx="1035.0" cy="867.9" r="4.5" fill="#fff" stroke="#9a90de" stroke-width="1.5"/>
<circle cx="1054.0" cy="871.0" r="4.5" fill="#fff" stroke="#9a90de" stroke-width="1.5"/>
<circle cx="1073.0" cy="871.0" r="4.5" fill="#fff" stroke="#9a90de" stroke-width="1.5"/>
<circle cx="1092.1" cy="868.3" r="4.5" fill="#fff" stroke="#9a90de" stroke-width="1.5"/>
<circle cx="1111.1" cy="861.0" r="4.5" fill="#fff" stroke="#9a90de" stroke-width="1.5"/>
<circle cx="1130.1" cy="863.8" r="4.5" fill="#fff" stroke="#9a90de" stroke-width="1.5"/>
<circle cx="1149.2" cy="863.8" r="4.5" fill="#fff" stroke="#9a90de" stroke-width="1.5"/>
<circle cx="1168.2" cy="865.8" r="4.5" fill="#fff" stroke="#9a90de" stroke-width="1.5"/>
<circle cx="1187.2" cy="870.6" r="4.5" fill="#fff" stroke="#9a90de" stroke-width="1.5"/>
<circle cx="1206.3" cy="871.0" r="4.5" fill="#fff" stroke="#9a90de" stroke-width="1.5"/>
<circle cx="1225.3" cy="866.9" r="4.5" fill="#fff" stroke="#9a90de" stroke-width="1.5"/>
<circle cx="1244.3" cy="863.8" r="4.5" fill="#fff" stroke="#9a90de" stroke-width="1.5"/>
<circle cx="1263.4" cy="864.2" r="4.5" fill="#fff" stroke="#9a90de" stroke-width="1.5"/>
<circle cx="1282.4" cy="863.8" r="4.5" fill="#fff" stroke="#9a90de" stroke-width="1.5"/>
<circle cx="1301.5" cy="866.9" r="4.5" fill="#fff" stroke="#9a90de" stroke-width="1.5"/>
<circle cx="1320.5" cy="870.6" r="4.5" fill="#fff" stroke="#9a90de" stroke-width="1.5"/>
<circle cx="1339.5" cy="870.6" r="4.5" fill="#fff" stroke="#9a90de" stroke-width="1.5"/>
<circle cx="1358.6" cy="864.8" r="4.5" fill="#fff" stroke="#9a90de" stroke-width="1.5"/>
<circle cx="1377.6" cy="865.8" r="4.5" fill="#fff" stroke="#9a90de" stroke-width="1.5"/>
<circle cx="1396.6" cy="866.9" r="4.5" fill="#fff" stroke="#9a90de" stroke-width="1.5"/>
<circle cx="1415.7" cy="860.6" r="4.5" fill="#fff" stroke="#9a90de" stroke-width="1.5"/>
<circle cx="1434.7" cy="867.9" r="4.5" fill="#fff" stroke="#9a90de" stroke-width="1.5"/>
<circle cx="1453.7" cy="870.6" r="4.5" fill="#fff" stroke="#9a90de" stroke-width="1.5"/>
<circle cx="1472.8" cy="871.0" r="4.5" fill="#fff" stroke="#9a90de" stroke-width="1.5"/>
<circle cx="1491.8" cy="867.9" r="4.5" fill="#fff" stroke="#9a90de" stroke-width="1.5"/>
<circle cx="1510.8" cy="864.8" r="4.5" fill="#fff" stroke="#9a90de" stroke-width="1.5"/>
<circle cx="1529.9" cy="864.4" r="4.5" fill="#fff" stroke="#9a90de" stroke-width="1.5"/>
<circle cx="1548.9" cy="863.8" r="4.5" fill="#fff" stroke="#9a90de" stroke-width="1.5"/>
<circle cx="1567.9" cy="868.4" r="4.5" fill="#fff" stroke="#9a90de" stroke-width="1.5"/>
<circle cx="1587.0" cy="870.4" r="4.5" fill="#fff" stroke="#9a90de" stroke-width="1.5"/>
<circle cx="1606.0" cy="870.4" r="4.5" fill="#fff" stroke="#9a90de" stroke-width="1.5"/>
<circle cx="1625.0" cy="861.9" r="4.5" fill="#fff" stroke="#9a90de" stroke-width="1.5"/>
<circle cx="1644.1" cy="864.4" r="4.5" fill="#fff" stroke="#9a90de" stroke-width="1.5"/>
<circle cx="1663.1" cy="864.4" r="4.5" fill="#fff" stroke="#9a90de" stroke-width="1.5"/>
<circle cx="1682.2" cy="865.8" r="4.5" fill="#fff" stroke="#9a90de" stroke-width="1.5"/>
<circle cx="1701.2" cy="862.4" r="4.5" fill="#fff" stroke="#9a90de" stroke-width="1.5"/>
<circle cx="1720.2" cy="870.4" r="4.5" fill="#fff" stroke="#9a90de" stroke-width="1.5"/>
<circle cx="1739.3" cy="872.3" r="4.5" fill="#fff" stroke="#9a90de" stroke-width="1.5"/>
<circle cx="1758.3" cy="865.8" r="4.5" fill="#fff" stroke="#9a90de" stroke-width="1.5"/>
<circle cx="1777.3" cy="863.8" r="4.5" fill="#fff" stroke="#9a90de" stroke-width="1.5"/>
<circle cx="1796.4" cy="864.0" r="4.5" fill="#fff" stroke="#9a90de" stroke-width="1.5"/>
<polyline points="349.7,860.0 368.7,864.4 387.8,869.6 406.8,869.6 425.8,863.8 444.9,860.0 463.9,857.0 482.9,859.0 502.0,854.4 521.0,869.6 540.0,869.6 559.1,867.5 578.1,866.2 597.2,861.0 616.2,861.0 635.2,865.4 654.3,870.6 673.3,870.6 692.3,863.8 711.4,865.8 730.4,864.2 749.4,861.0 768.5,863.3 787.5,869.6 806.5,870.6 825.6,851.2 844.6,862.7 863.6,866.2 882.7,864.8 901.7,868.3 920.8,870.6 939.8,870.6 958.8,857.0 977.9,864.8 996.9,866.9 1015.9,863.8 1035.0,864.8 1054.0,870.6 1073.0,870.6 1092.1,863.8 1111.1,835.6 1130.1,857.0 1149.2,862.7 1168.2,867.5 1187.2,870.6 1206.3,870.6 1225.3,865.4 1244.3,862.7 1263.4,841.9 1282.4,854.4 1301.5,864.8 1320.5,870.6 1339.5,870.6 1358.6,867.5 1377.6,859.2 1396.6,861.2 1415.7,864.2 1434.7,864.4 1453.7,870.4 1472.8,870.4 1491.8,862.4 1510.8,830.8 1529.9,855.5 1548.9,847.6 1567.9,862.4 1587.0,870.4 1606.0,870.4 1625.0,856.9 1644.1,853.1 1663.1,855.5 1682.2,845.6 1701.2,843.2 1720.2,864.4 1739.3,869.0 1758.3,851.2 1777.3,844.6 1796.4,850.0" fill="none" stroke="#525456" stroke-width="1.3" stroke-linejoin="round"/>
<circle cx="349.7" cy="860.0" r="4.5" fill="#fff" stroke="#525456" stroke-width="1.5"/>
<circle cx="368.7" cy="864.4" r="4.5" fill="#fff" stroke="#525456" stroke-width="1.5"/>
<circle cx="387.8" cy="869.6" r="4.5" fill="#fff" stroke="#525456" stroke-width="1.5"/>
<circle cx="406.8" cy="869.6" r="4.5" fill="#fff" stroke="#525456" stroke-width="1.5"/>
<circle cx="425.8" cy="863.8" r="4.5" fill="#fff" stroke="#525456" stroke-width="1.5"/>
<circle cx="444.9" cy="860.0" r="4.5" fill="#fff" stroke="#525456" stroke-width="1.5"/>
<circle cx="463.9" cy="857.0" r="4.5" fill="#fff" stroke="#525456" stroke-width="1.5"/>
<circle cx="482.9" cy="859.0" r="4.5" fill="#fff" stroke="#525456" stroke-width="1.5"/>
<circle cx="502.0" cy="854.4" r="4.5" fill="#fff" stroke="#525456" stroke-width="1.5"/>
<circle cx="521.0" cy="869.6" r="4.5" fill="#fff" stroke="#525456" stroke-width="1.5"/>
<circle cx="540.0" cy="869.6" r="4.5" fill="#fff" stroke="#525456" stroke-width="1.5"/>
<circle cx="559.1" cy="867.5" r="4.5" fill="#fff" stroke="#525456" stroke-width="1.5"/>
<circle cx="578.1" cy="866.2" r="4.5" fill="#fff" stroke="#525456" stroke-width="1.5"/>
<circle cx="597.2" cy="861.0" r="4.5" fill="#fff" stroke="#525456" stroke-width="1.5"/>
<circle cx="616.2" cy="861.0" r="4.5" fill="#fff" stroke="#525456" stroke-width="1.5"/>
<circle cx="635.2" cy="865.4" r="4.5" fill="#fff" stroke="#525456" stroke-width="1.5"/>
<circle cx="654.3" cy="870.6" r="4.5" fill="#fff" stroke="#525456" stroke-width="1.5"/>
<circle cx="673.3" cy="870.6" r="4.5" fill="#fff" stroke="#525456" stroke-width="1.5"/>
<circle cx="692.3" cy="863.8" r="4.5" fill="#fff" stroke="#525456" stroke-width="1.5"/>
<circle cx="711.4" cy="865.8" r="4.5" fill="#fff" stroke="#525456" stroke-width="1.5"/>
<circle cx="730.4" cy="864.2" r="4.5" fill="#fff" stroke="#525456" stroke-width="1.5"/>
<circle cx="749.4" cy="861.0" r="4.5" fill="#fff" stroke="#525456" stroke-width="1.5"/>
<circle cx="768.5" cy="863.3" r="4.5" fill="#fff" stroke="#525456" stroke-width="1.5"/>
<circle cx="787.5" cy="869.6" r="4.5" fill="#fff" stroke="#525456" stroke-width="1.5"/>
<circle cx="806.5" cy="870.6" r="4.5" fill="#fff" stroke="#525456" stroke-width="1.5"/>
<circle cx="825.6" cy="851.2" r="4.5" fill="#fff" stroke="#525456" stroke-width="1.5"/>
<circle cx="844.6" cy="862.7" r="4.5" fill="#fff" stroke="#525456" stroke-width="1.5"/>
<circle cx="863.6" cy="866.2" r="4.5" fill="#fff" stroke="#525456" stroke-width="1.5"/>
<circle cx="882.7" cy="864.8" r="4.5" fill="#fff" stroke="#525456" stroke-width="1.5"/>
<circle cx="901.7" cy="868.3" r="4.5" fill="#fff" stroke="#525456" stroke-width="1.5"/>
<circle cx="920.8" cy="870.6" r="4.5" fill="#fff" stroke="#525456" stroke-width="1.5"/>
<circle cx="939.8" cy="870.6" r="4.5" fill="#fff" stroke="#525456" stroke-width="1.5"/>
<circle cx="958.8" cy="857.0" r="4.5" fill="#fff" stroke="#525456" stroke-width="1.5"/>
<circle cx="977.9" cy="864.8" r="4.5" fill="#fff" stroke="#525456" stroke-width="1.5"/>
<circle cx="996.9" cy="866.9" r="4.5" fill="#fff" stroke="#525456" stroke-width="1.5"/>
<circle cx="1015.9" cy="863.8" r="4.5" fill="#fff" stroke="#525456" stroke-width="1.5"/>
<circle cx="1035.0" cy="864.8" r="4.5" fill="#fff" stroke="#525456" stroke-width="1.5"/>
<circle cx="1054.0" cy="870.6" r="4.5" fill="#fff" stroke="#525456" stroke-width="1.5"/>
<circle cx="1073.0" cy="870.6" r="4.5" fill="#fff" stroke="#525456" stroke-width="1.5"/>
<circle cx="1092.1" cy="863.8" r="4.5" fill="#fff" stroke="#525456" stroke-width="1.5"/>
<circle cx="1111.1" cy="835.6" r="4.5" fill="#fff" stroke="#525456" stroke-width="1.5"/>
<circle cx="1130.1" cy="857.0" r="4.5" fill="#fff" stroke="#525456" stroke-width="1.5"/>
<circle cx="1149.2" cy="862.7" r="4.5" fill="#fff" stroke="#525456" stroke-width="1.5"/>
<circle cx="1168.2" cy="867.5" r="4.5" fill="#fff" stroke="#525456" stroke-width="1.5"/>
<circle cx="1187.2" cy="870.6" r="4.5" fill="#fff" stroke="#525456" stroke-width="1.5"/>
<circle cx="1206.3" cy="870.6" r="4.5" fill="#fff" stroke="#525456" stroke-width="1.5"/>
<circle cx="1225.3" cy="865.4" r="4.5" fill="#fff" stroke="#525456" stroke-width="1.5"/>
<circle cx="1244.3" cy="862.7" r="4.5" fill="#fff" stroke="#525456" stroke-width="1.5"/>
<circle cx="1263.4" cy="841.9" r="4.5" fill="#fff" stroke="#525456" stroke-width="1.5"/>
<circle cx="1282.4" cy="854.4" r="4.5" fill="#fff" stroke="#525456" stroke-width="1.5"/>
<circle cx="1301.5" cy="864.8" r="4.5" fill="#fff" stroke="#525456" stroke-width="1.5"/>
<circle cx="1320.5" cy="870.6" r="4.5" fill="#fff" stroke="#525456" stroke-width="1.5"/>
<circle cx="1339.5" cy="870.6" r="4.5" fill="#fff" stroke="#525456" stroke-width="1.5"/>
<circle cx="1358.6" cy="867.5" r="4.5" fill="#fff" stroke="#525456" stroke-width="1.5"/>
<circle cx="1377.6" cy="859.2" r="4.5" fill="#fff" stroke="#525456" stroke-width="1.5"/>
<circle cx="1396.6" cy="861.2" r="4.5" fill="#fff" stroke="#525456" stroke-width="1.5"/>
<circle cx="1415.7" cy="864.2" r="4.5" fill="#fff" stroke="#525456" stroke-width="1.5"/>
<circle cx="1434.7" cy="864.4" r="4.5" fill="#fff" stroke="#525456" stroke-width="1.5"/>
<circle cx="1453.7" cy="870.4" r="4.5" fill="#fff" stroke="#525456" stroke-width="1.5"/>
<circle cx="1472.8" cy="870.4" r="4.5" fill="#fff" stroke="#525456" stroke-width="1.5"/>
<circle cx="1491.8" cy="862.4" r="4.5" fill="#fff" stroke="#525456" stroke-width="1.5"/>
<circle cx="1510.8" cy="830.8" r="4.5" fill="#fff" stroke="#525456" stroke-width="1.5"/>
<circle cx="1529.9" cy="855.5" r="4.5" fill="#fff" stroke="#525456" stroke-width="1.5"/>
<circle cx="1548.9" cy="847.6" r="4.5" fill="#fff" stroke="#525456" stroke-width="1.5"/>
<circle cx="1567.9" cy="862.4" r="4.5" fill="#fff" stroke="#525456" stroke-width="1.5"/>
<circle cx="1587.0" cy="870.4" r="4.5" fill="#fff" stroke="#525456" stroke-width="1.5"/>
<circle cx="1606.0" cy="870.4" r="4.5" fill="#fff" stroke="#525456" stroke-width="1.5"/>
<circle cx="1625.0" cy="856.9" r="4.5" fill="#fff" stroke="#525456" stroke-width="1.5"/>
<circle cx="1644.1" cy="853.1" r="4.5" fill="#fff" stroke="#525456" stroke-width="1.5"/>
<circle cx="1663.1" cy="855.5" r="4.5" fill="#fff" stroke="#525456" stroke-width="1.5"/>
<circle cx="1682.2" cy="845.6" r="4.5" fill="#fff" stroke="#525456" stroke-width="1.5"/>
<circle cx="1701.2" cy="843.2" r="4.5" fill="#fff" stroke="#525456" stroke-width="1.5"/>
<circle cx="1720.2" cy="864.4" r="4.5" fill="#fff" stroke="#525456" stroke-width="1.5"/>
<circle cx="1739.3" cy="869.0" r="4.5" fill="#fff" stroke="#525456" stroke-width="1.5"/>
<circle cx="1758.3" cy="851.2" r="4.5" fill="#fff" stroke="#525456" stroke-width="1.5"/>
<circle cx="1777.3" cy="844.6" r="4.5" fill="#fff" stroke="#525456" stroke-width="1.5"/>
<circle cx="1796.4" cy="850.0" r="4.5" fill="#fff" stroke="#525456" stroke-width="1.5"/>
</svg>
  <div id="legend" style="left:1595.6px;top:311.7px;width:120px;height:310px"></div>
<div class="cb" style="left:1615.5px;top:335.1px"><svg width="17" height="17" viewBox="0 0 17 17"><path d="M3.8 8.8 L7 11.8 L13.2 5.2" fill="none" stroke="#fff" stroke-width="2.2"/></svg></div>
<div class="ldot" style="left:1639px;top:338.6px;border-color:#4a8fd0"></div>
<div class="txt" style="left:1655.5px;top:335.6px;font-size:16px;color:#444">W</div>
<div class="cb" style="left:1615.5px;top:384.6px"><svg width="17" height="17" viewBox="0 0 17 17"><path d="M3.8 8.8 L7 11.8 L13.2 5.2" fill="none" stroke="#fff" stroke-width="2.2"/></svg></div>
<div class="ldot" style="left:1639px;top:388.1px;border-color:#5fb35a"></div>
<div class="txt" style="left:1655.5px;top:385.1px;font-size:16px;color:#444">B</div>
<div class="cb" style="left:1615.5px;top:434.2px"><svg width="17" height="17" viewBox="0 0 17 17"><path d="M3.8 8.8 L7 11.8 L13.2 5.2" fill="none" stroke="#fff" stroke-width="2.2"/></svg></div>
<div class="ldot" style="left:1639px;top:437.7px;border-color:#e9a94a"></div>
<div class="txt" style="left:1655.5px;top:434.7px;font-size:16px;color:#444">6</div>
<div class="cb" style="left:1615.5px;top:483.7px"><svg width="17" height="17" viewBox="0 0 17 17"><path d="M3.8 8.8 L7 11.8 L13.2 5.2" fill="none" stroke="#fff" stroke-width="2.2"/></svg></div>
<div class="ldot" style="left:1639px;top:487.2px;border-color:#c23b5e"></div>
<div class="txt" style="left:1655.5px;top:484.2px;font-size:16px;color:#444">E</div>
<div class="cb" style="left:1615.5px;top:533.3px"><svg width="17" height="17" viewBox="0 0 17 17"><path d="M3.8 8.8 L7 11.8 L13.2 5.2" fill="none" stroke="#fff" stroke-width="2.2"/></svg></div>
<div class="ldot" style="left:1639px;top:536.8px;border-color:#222"></div>
<div class="txt" style="left:1655.5px;top:533.8px;font-size:16px;color:#444">M</div>
<div class="cb" style="left:1615.5px;top:582.8px"><svg width="17" height="17" viewBox="0 0 17 17"><path d="M3.8 8.8 L7 11.8 L13.2 5.2" fill="none" stroke="#fff" stroke-width="2.2"/></svg></div>
<div class="ldot" style="left:1639px;top:586.3px;border-color:#4b3aa8"></div>
<div class="txt" style="left:1655.5px;top:583.3px;font-size:16px;color:#444">S</div>
  <!-- bottom cards -->
  <div class="card" style="left:94.7px;top:916px;width:608.8px;height:300px"></div>
  <div class="card" style="left:727.3px;top:916px;width:609.4px;height:300px"></div>
  <div class="card" style="left:1360.4px;top:916px;width:400px;height:300px"></div>
  <div class="chip" style="left:752.3px;top:995.0px;width:155.0px;height:30.0px"></div>
<div class="chip" style="left:917.3px;top:995.0px;width:160.4px;height:30.0px"></div>
<div class="chip" style="left:1087.7px;top:995.0px;width:142.3px;height:30.0px"></div>
<div class="chip" style="left:752.3px;top:1035.7px;width:198.4px;height:30.0px"></div>
<div class="chip" style="left:960.7px;top:1035.7px;width:190.0px;height:30.0px"></div>
<div class="chip" style="left:1160.7px;top:1035.7px;width:106.6px;height:30.0px"></div>
<div class="chip" style="left:752.3px;top:1075.7px;width:167.7px;height:30.0px"></div>
<div class="chip" style="left:930.7px;top:1075.7px;width:207.6px;height:30.0px"></div>
<div class="bchip" style="left:117px;top:995px;width:139px;height:30px"><div class="bin"></div></div>
<div class="bchip" style="left:265px;top:995px;width:156px;height:30px"><div class="bin"></div></div>
<div class="bchip" style="left:429px;top:995px;width:149px;height:30px"><div class="bin"></div></div>
<div class="bchip" style="left:117px;top:1036px;width:233px;height:30px"><div class="bin"></div></div>
<div class="bchip" style="left:360px;top:1036px;width:111px;height:30px"><div class="bin"></div></div>
<div class="bchip" style="left:117px;top:1078px;width:251px;height:30px"><div class="bin"></div></div>
<div class="bchip" style="left:377px;top:1078px;width:211px;height:30px"><div class="bin"></div></div>
  <div class="abs" style="left:225.7px;top:94.9px;width:1.7px;height:16.9px;background:#6d7278"></div>
  <div id="t_dash" class="txt" style="left:88.70px;top:21.96px;font-size:18px;font-weight:700;color:#e9eef3;letter-spacing:-1.088px;">DASHBOARD</div>
<div id="t_title" class="txt" style="left:94.90px;top:90.68px;font-size:22px;font-weight:400;color:#1c1f23;letter-spacing:1.500px;-webkit-text-stroke:.35px #1c1f23;">Dashboard</div>
<div id="t_inbox" class="txt" style="left:237.20px;top:90.68px;font-size:22px;font-weight:400;color:#1b7dc8;letter-spacing:2.000px;-webkit-text-stroke:.35px #1b7dc8;">Inbox</div>
<div id="t_all" class="txt" style="left:127.30px;top:223.96px;font-size:18px;font-weight:400;color:#ffffff;letter-spacing:0.209px;-webkit-text-stroke:.25px #fff;">All Activity</div>
<div id="t_tab0" class="txt" style="left:257.50px;top:225.11px;font-size:17px;font-weight:400;color:#36393e;letter-spacing:0.567px;-webkit-text-stroke:.2px #36393e;">Website Activity</div>
<div id="t_tab1" class="txt" style="left:431.50px;top:225.11px;font-size:17px;font-weight:400;color:#36393e;letter-spacing:0.658px;-webkit-text-stroke:.2px #36393e;">B2B Network Activity</div>
<div id="t_tab2" class="txt" style="left:647.80px;top:225.11px;font-size:17px;font-weight:400;color:#36393e;letter-spacing:0.533px;-webkit-text-stroke:.2px #36393e;">6sense Media Campaigns</div>
<div id="t_tab3" class="txt" style="left:901.30px;top:225.11px;font-size:17px;font-weight:400;color:#36393e;letter-spacing:0.583px;-webkit-text-stroke:.2px #36393e;">External Media Campaigns</div>
<div id="t_tab4" class="txt" style="left:1165.00px;top:225.11px;font-size:17px;font-weight:400;color:#36393e;letter-spacing:0.657px;-webkit-text-stroke:.2px #36393e;">Marketing Engagement Activity</div>
<div id="t_tab5" class="txt" style="left:1463.60px;top:225.11px;font-size:17px;font-weight:400;color:#36393e;letter-spacing:0.293px;-webkit-text-stroke:.2px #36393e;">Sales Engagement</div>
<div id="t_sl0" class="txt" style="left:155.50px;top:831.26px;font-size:18px;font-weight:400;color:#36393e;letter-spacing:0.140px;-webkit-text-stroke:.2px #36393e;">Website Accounts</div>
<div id="t_sv0" class="txt" style="left:155.50px;top:855.53px;font-size:23px;font-weight:400;color:#1f7bc0;letter-spacing:0.083px;-webkit-text-stroke:.2px #1f7bc0;">486,830</div>
<div id="t_sl1" class="txt" style="left:419.00px;top:831.26px;font-size:18px;font-weight:400;color:#36393e;letter-spacing:0.075px;-webkit-text-stroke:.2px #36393e;">6sense Media Accounts</div>
<div id="t_sv1" class="txt" style="left:419.00px;top:855.53px;font-size:23px;font-weight:400;color:#1f7bc0;letter-spacing:0.280px;-webkit-text-stroke:.2px #1f7bc0;">60,818</div>
<div id="t_sl2" class="txt" style="left:730.00px;top:831.26px;font-size:18px;font-weight:400;color:#36393e;letter-spacing:0.159px;-webkit-text-stroke:.2px #36393e;">External Media Accounts</div>
<div id="t_sv2" class="txt" style="left:730.00px;top:855.53px;font-size:23px;font-weight:400;color:#1f7bc0;letter-spacing:0.000px;-webkit-text-stroke:.2px #1f7bc0;">0</div>
<div id="t_sl3" class="txt" style="left:1050.50px;top:831.26px;font-size:18px;font-weight:400;color:#36393e;letter-spacing:0.158px;-webkit-text-stroke:.2px #36393e;">B2B Network Accounts</div>
<div id="t_sv3" class="txt" style="left:1051.50px;top:855.53px;font-size:23px;font-weight:400;color:#1f7bc0;letter-spacing:0.083px;-webkit-text-stroke:.2px #1f7bc0;">433,917</div>
<div id="t_sl4" class="txt" style="left:1356.50px;top:831.26px;font-size:18px;font-weight:400;color:#36393e;letter-spacing:0.080px;-webkit-text-stroke:.2px #36393e;">Marketing Engaged Accounts</div>
<div id="t_sv4" class="txt" style="left:1356.50px;top:855.53px;font-size:23px;font-weight:400;color:#222428;letter-spacing:0.200px;-webkit-text-stroke:.2px #222428;">24,296</div>
<div id="t_c1" class="txt" style="left:121.70px;top:948.91px;font-size:17px;font-weight:400;color:#1f2328;letter-spacing:-0.284px;-webkit-text-stroke:.3px #1f2328;">TOP BRANDED KEYWORDS</div>
<div id="t_v1" class="txt" style="left:616.00px;top:948.91px;font-size:17px;font-weight:400;color:#2a7fc6;letter-spacing:0.614px;">View All</div>
<div id="t_c2" class="txt" style="left:753.30px;top:948.91px;font-size:17px;font-weight:400;color:#1f2328;letter-spacing:-0.437px;-webkit-text-stroke:.3px #1f2328;">TOP GENERIC KEYWORDS</div>
<div id="t_v2" class="txt" style="left:1248.30px;top:948.91px;font-size:17px;font-weight:400;color:#2a7fc6;letter-spacing:0.529px;">View All</div>
<div id="t_c3" class="txt" style="left:1385.70px;top:948.91px;font-size:17px;font-weight:400;color:#1f2328;letter-spacing:-0.371px;-webkit-text-stroke:.3px #1f2328;">TOP KEYWORD GROUPS</div>
<div id="t_g1" class="txt" style="left:1384.70px;top:1000.11px;font-size:17px;font-weight:400;color:#3d8fd0;letter-spacing:0.371px;">Sales Intelligence</div>
<div id="t_g2" class="txt" style="left:1384.70px;top:1024.11px;font-size:17px;font-weight:400;color:#3d8fd0;letter-spacing:0.000px;">(generic)</div>
<div id="t_g3" class="txt" style="left:1588.70px;top:1000.11px;font-size:17px;font-weight:400;color:#3a3d42;letter-spacing:0.483px;">173,980</div>
<div id="t_g4" class="txt" style="left:1384.70px;top:1070.01px;font-size:17px;font-weight:400;color:#2a7fc6;letter-spacing:0.000px;">Drift</div>
<div id="t_chip0" class="txt" style="left:759.00px;top:1001.61px;font-size:17px;font-weight:400;color:#2f7fc4;letter-spacing:0.000px;">ai chatbot (97,516)</div>
<div id="t_chip1" class="txt" style="left:924.00px;top:1001.61px;font-size:17px;font-weight:400;color:#2f7fc4;letter-spacing:0.000px;">mailing list (93,469)</div>
<div id="t_chip2" class="txt" style="left:1094.70px;top:1001.61px;font-size:17px;font-weight:400;color:#2f7fc4;letter-spacing:-0.062px;">chat bot (60,709)</div>
<div id="t_chip3" class="txt" style="left:759.00px;top:1042.31px;font-size:17px;font-weight:400;color:#2f7fc4;letter-spacing:0.013px;">lead generation (32,564)</div>
<div id="t_chip4" class="txt" style="left:967.30px;top:1042.31px;font-size:17px;font-weight:400;color:#2f7fc4;letter-spacing:-0.026px;">contact details (27,719)</div>
<div id="t_chip5" class="txt" style="left:1166.70px;top:1042.31px;font-size:17px;font-weight:400;color:#2f7fc4;letter-spacing:-0.155px;">cdp (27,237)</div>
<div id="t_chip6" class="txt" style="left:759.00px;top:1082.31px;font-size:17px;font-weight:400;color:#2f7fc4;letter-spacing:-0.056px;">company id (24,567)</div>
<div id="t_chip7" class="txt" style="left:937.30px;top:1082.31px;font-size:17px;font-weight:400;color:#2f7fc4;letter-spacing:-0.092px;">conversational ai (22,870)</div>
  <!-- cursor -->
  <svg class="abs" style="left:0;top:0" width="1658" height="1090" viewBox="130 140 1658 1090">
    <path d="M1593.4 404.2 L1593.4 418.6 L1596.8 415.4 L1599.6 423.4 L1602.2 422.4 L1599.4 414.6 L1603.8 414.4 Z" fill="#050505" stroke="#fff" stroke-width="1" stroke-linejoin="round"/>
  </svg>
</div>
</body></html>
